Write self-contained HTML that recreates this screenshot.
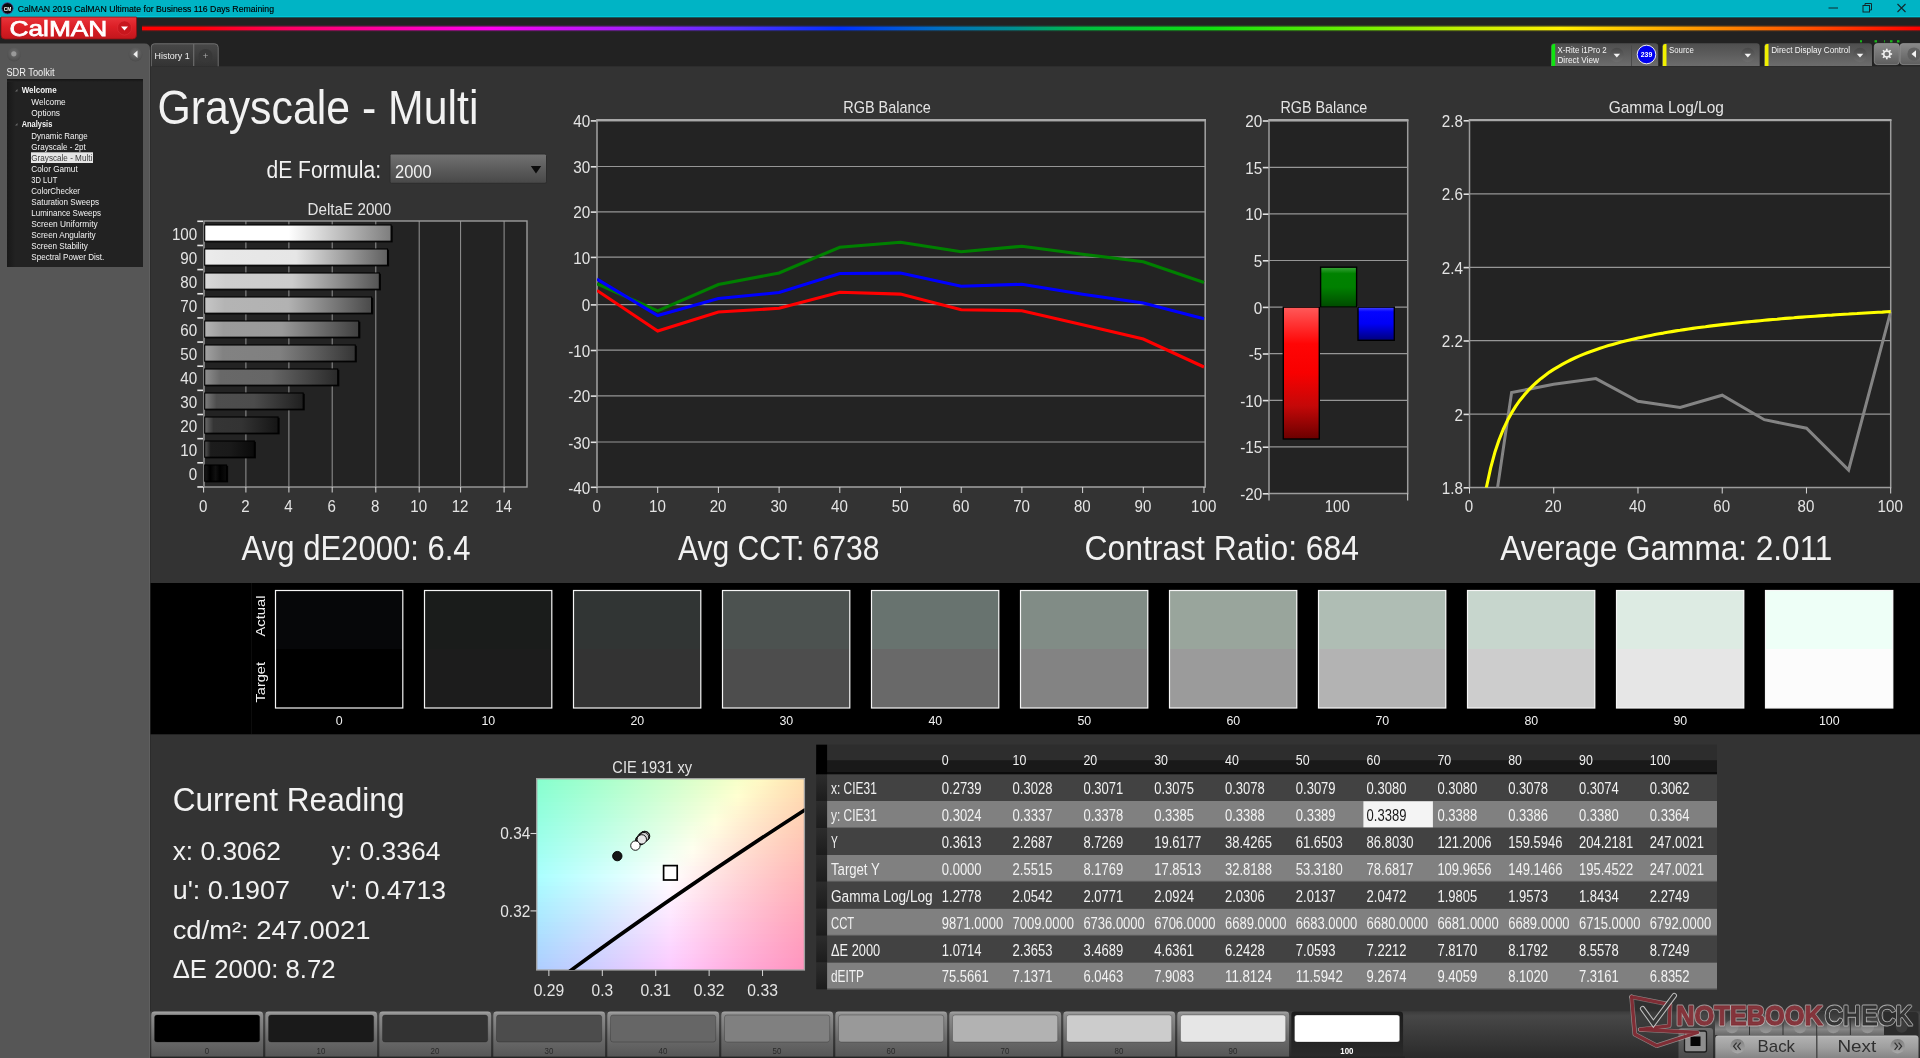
<!DOCTYPE html>
<html lang="en"><head><meta charset="utf-8"><title>CalMAN 2019 - Grayscale - Multi</title>
<style>
html,body{margin:0;padding:0;background:#222222;overflow:hidden}
body{width:1920px;height:1058px}
svg{display:block;font-family:"Liberation Sans",sans-serif;will-change:transform}
text{white-space:pre}
</style></head><body>
<svg width="1920" height="1058" viewBox="0 0 1920 1058">
<defs>
<linearGradient id="logo" x1="0" y1="0" x2="0" y2="1"><stop offset="0" stop-color="#e8353b"/><stop offset="0.45" stop-color="#dc1f26"/><stop offset="1" stop-color="#c2161c"/></linearGradient>
<linearGradient id="rainbow" x1="0" y1="0" x2="1" y2="0"><stop offset="0.0" stop-color="#ff0000"/><stop offset="0.0326" stop-color="#ff0008"/><stop offset="0.0832" stop-color="#ff0064"/><stop offset="0.1395" stop-color="#ff00a8"/><stop offset="0.1957" stop-color="#ff00f0"/><stop offset="0.2801" stop-color="#a020ff"/><stop offset="0.3363" stop-color="#5030ff"/><stop offset="0.3926" stop-color="#0030ff"/><stop offset="0.4488" stop-color="#0070c0"/><stop offset="0.491" stop-color="#009090"/><stop offset="0.5304" stop-color="#00c040"/><stop offset="0.6007" stop-color="#10e010"/><stop offset="0.685" stop-color="#70f000"/><stop offset="0.7413" stop-color="#c0f000"/><stop offset="0.7975" stop-color="#fff000"/><stop offset="0.8678" stop-color="#ffa000"/><stop offset="0.9381" stop-color="#ff5000"/><stop offset="1.0" stop-color="#ff0000"/></linearGradient>
<radialGradient id="knob" cx="0.5" cy="0.4" r="0.6"><stop offset="0" stop-color="#707070"/><stop offset="1" stop-color="#4c4c4c"/></radialGradient>
<linearGradient id="tree" x1="0" y1="0" x2="1" y2="0"><stop offset="0" stop-color="#181818"/><stop offset="0.06" stop-color="#222222"/><stop offset="1" stop-color="#222222"/></linearGradient>
<linearGradient id="treetop" x1="0" y1="0" x2="0" y2="1"><stop offset="0" stop-color="#141414"/><stop offset="1" stop-color="#222222"/></linearGradient>
<linearGradient id="tab" x1="0" y1="0" x2="0" y2="1"><stop offset="0" stop-color="#484848"/><stop offset="1" stop-color="#333333"/></linearGradient>
<linearGradient id="tb" x1="0" y1="0" x2="0" y2="1"><stop offset="0" stop-color="#4e4e4e"/><stop offset="1" stop-color="#6c6c6c"/></linearGradient>
<linearGradient id="ddc" x1="0" y1="0" x2="0" y2="1"><stop offset="0" stop-color="#484848"/><stop offset="1" stop-color="#6e6e6e"/></linearGradient>
<linearGradient id="gb" x1="0" y1="0" x2="0" y2="1"><stop offset="0" stop-color="#8a8a8a"/><stop offset="0.5" stop-color="#747474"/><stop offset="1" stop-color="#5e5e5e"/></linearGradient>
<linearGradient id="dd" x1="0" y1="0" x2="0" y2="1"><stop offset="0" stop-color="#727272"/><stop offset="0.5" stop-color="#5c5c5c"/><stop offset="1" stop-color="#484848"/></linearGradient>
<linearGradient id="b0" x1="0" y1="0" x2="1" y2="0"><stop offset="0" stop-color="#1a1a1a"/><stop offset="0.25" stop-color="#000000"/><stop offset="0.5" stop-color="#101010"/><stop offset="0.7" stop-color="#000000"/><stop offset="1" stop-color="#0c0c0c"/></linearGradient>
<linearGradient id="b1" x1="0" y1="0" x2="1" y2="0"><stop offset="0" stop-color="#575757"/><stop offset="0.12" stop-color="#1c1c1c"/><stop offset="0.5" stop-color="#1a1a1a"/><stop offset="1" stop-color="#0a0a0a"/></linearGradient>
<linearGradient id="b2" x1="0" y1="0" x2="1" y2="0"><stop offset="0" stop-color="#6a6a6a"/><stop offset="0.12" stop-color="#353535"/><stop offset="0.5" stop-color="#333333"/><stop offset="1" stop-color="#151515"/></linearGradient>
<linearGradient id="b3" x1="0" y1="0" x2="1" y2="0"><stop offset="0" stop-color="#7c7c7c"/><stop offset="0.12" stop-color="#4e4e4e"/><stop offset="0.5" stop-color="#4c4c4c"/><stop offset="1" stop-color="#1f1f1f"/></linearGradient>
<linearGradient id="b4" x1="0" y1="0" x2="1" y2="0"><stop offset="0" stop-color="#8f8f8f"/><stop offset="0.12" stop-color="#686868"/><stop offset="0.5" stop-color="#666666"/><stop offset="1" stop-color="#2a2a2a"/></linearGradient>
<linearGradient id="b5" x1="0" y1="0" x2="1" y2="0"><stop offset="0" stop-color="#a2a2a2"/><stop offset="0.12" stop-color="#828282"/><stop offset="0.5" stop-color="#808080"/><stop offset="1" stop-color="#353535"/></linearGradient>
<linearGradient id="b6" x1="0" y1="0" x2="1" y2="0"><stop offset="0" stop-color="#b4b4b4"/><stop offset="0.12" stop-color="#9b9b9b"/><stop offset="0.5" stop-color="#999999"/><stop offset="1" stop-color="#404040"/></linearGradient>
<linearGradient id="b7" x1="0" y1="0" x2="1" y2="0"><stop offset="0" stop-color="#c6c6c6"/><stop offset="0.12" stop-color="#b4b4b4"/><stop offset="0.5" stop-color="#b2b2b2"/><stop offset="1" stop-color="#4a4a4a"/></linearGradient>
<linearGradient id="b8" x1="0" y1="0" x2="1" y2="0"><stop offset="0" stop-color="#d9d9d9"/><stop offset="0.12" stop-color="#cecece"/><stop offset="0.5" stop-color="#cccccc"/><stop offset="1" stop-color="#555555"/></linearGradient>
<linearGradient id="b9" x1="0" y1="0" x2="1" y2="0"><stop offset="0" stop-color="#ececec"/><stop offset="0.12" stop-color="#e8e8e8"/><stop offset="0.5" stop-color="#e6e6e6"/><stop offset="1" stop-color="#606060"/></linearGradient>
<linearGradient id="b10" x1="0" y1="0" x2="1" y2="0"><stop offset="0" stop-color="#ffffff"/><stop offset="0.45" stop-color="#ffffff"/><stop offset="1" stop-color="#7e7e7e"/></linearGradient>
<clipPath id="cpA"><rect x="597" y="121" width="608.2" height="366"/></clipPath>
<linearGradient id="rbar" x1="0" y1="0" x2="0" y2="1"><stop offset="0" stop-color="#ff5a5a"/><stop offset="0.28" stop-color="#ff0505"/><stop offset="0.5" stop-color="#f80000"/><stop offset="0.75" stop-color="#c40808"/><stop offset="1" stop-color="#6a0000"/></linearGradient>
<linearGradient id="gbar" x1="0" y1="0" x2="0" y2="1"><stop offset="0" stop-color="#3aa43a"/><stop offset="0.16" stop-color="#008200"/><stop offset="0.5" stop-color="#008000"/><stop offset="1" stop-color="#004a00"/></linearGradient>
<linearGradient id="bbar" x1="0" y1="0" x2="0" y2="1"><stop offset="0" stop-color="#4848ff"/><stop offset="0.14" stop-color="#0404ff"/><stop offset="0.5" stop-color="#0000f6"/><stop offset="1" stop-color="#00007c"/></linearGradient>
<clipPath id="cpG"><rect x="1469.5" y="120.5" width="422.20000000000005" height="367.0"/></clipPath>
<linearGradient id="c0" x1="0" y1="0" x2="1" y2="0"><stop offset="0.0" stop-color="#86ffce"/><stop offset="0.0833" stop-color="#91ffcd"/><stop offset="0.1667" stop-color="#9dffcd"/><stop offset="0.25" stop-color="#a9ffcc"/><stop offset="0.3333" stop-color="#b5ffcc"/><stop offset="0.4167" stop-color="#c2ffcb"/><stop offset="0.5" stop-color="#cfffcb"/><stop offset="0.5833" stop-color="#dcffca"/><stop offset="0.6667" stop-color="#e9ffca"/><stop offset="0.75" stop-color="#f7ffc9"/><stop offset="0.8333" stop-color="#fff9c4"/><stop offset="0.9167" stop-color="#ffecb9"/><stop offset="1.0" stop-color="#ffe0af"/></linearGradient>
<linearGradient id="c1" x1="0" y1="0" x2="1" y2="0"><stop offset="0.0" stop-color="#87ffd0"/><stop offset="0.0833" stop-color="#93ffcf"/><stop offset="0.1667" stop-color="#9effcf"/><stop offset="0.25" stop-color="#abffce"/><stop offset="0.3333" stop-color="#b7ffce"/><stop offset="0.4167" stop-color="#c4ffcd"/><stop offset="0.5" stop-color="#d0ffcd"/><stop offset="0.5833" stop-color="#deffcc"/><stop offset="0.6667" stop-color="#ebffcb"/><stop offset="0.75" stop-color="#f9ffcb"/><stop offset="0.8333" stop-color="#fff7c4"/><stop offset="0.9167" stop-color="#ffeab9"/><stop offset="1.0" stop-color="#ffdeaf"/></linearGradient>
<linearGradient id="c2" x1="0" y1="0" x2="1" y2="0"><stop offset="0.0" stop-color="#88ffd1"/><stop offset="0.0833" stop-color="#94ffd1"/><stop offset="0.1667" stop-color="#a0ffd1"/><stop offset="0.25" stop-color="#acffd0"/><stop offset="0.3333" stop-color="#b9ffd0"/><stop offset="0.4167" stop-color="#c5ffcf"/><stop offset="0.5" stop-color="#d2ffcf"/><stop offset="0.5833" stop-color="#e0ffce"/><stop offset="0.6667" stop-color="#edffcd"/><stop offset="0.75" stop-color="#fbffcd"/><stop offset="0.8333" stop-color="#fff5c4"/><stop offset="0.9167" stop-color="#ffe8ba"/><stop offset="1.0" stop-color="#ffddb0"/></linearGradient>
<linearGradient id="c3" x1="0" y1="0" x2="1" y2="0"><stop offset="0.0" stop-color="#8affd3"/><stop offset="0.0833" stop-color="#96ffd3"/><stop offset="0.1667" stop-color="#a1ffd2"/><stop offset="0.25" stop-color="#aeffd2"/><stop offset="0.3333" stop-color="#baffd1"/><stop offset="0.4167" stop-color="#c7ffd1"/><stop offset="0.5" stop-color="#d4ffd1"/><stop offset="0.5833" stop-color="#e1ffd0"/><stop offset="0.6667" stop-color="#efffcf"/><stop offset="0.75" stop-color="#fdffcf"/><stop offset="0.8333" stop-color="#fff3c5"/><stop offset="0.9167" stop-color="#ffe6ba"/><stop offset="1.0" stop-color="#ffdbb0"/></linearGradient>
<linearGradient id="c4" x1="0" y1="0" x2="1" y2="0"><stop offset="0.0" stop-color="#8bffd5"/><stop offset="0.0833" stop-color="#97ffd5"/><stop offset="0.1667" stop-color="#a3ffd4"/><stop offset="0.25" stop-color="#afffd4"/><stop offset="0.3333" stop-color="#bcffd3"/><stop offset="0.4167" stop-color="#c9ffd3"/><stop offset="0.5" stop-color="#d6ffd2"/><stop offset="0.5833" stop-color="#e3ffd2"/><stop offset="0.6667" stop-color="#f1ffd1"/><stop offset="0.75" stop-color="#ffffd1"/><stop offset="0.8333" stop-color="#fff1c5"/><stop offset="0.9167" stop-color="#ffe5ba"/><stop offset="1.0" stop-color="#ffd9b0"/></linearGradient>
<linearGradient id="c5" x1="0" y1="0" x2="1" y2="0"><stop offset="0.0" stop-color="#8dffd7"/><stop offset="0.0833" stop-color="#98ffd7"/><stop offset="0.1667" stop-color="#a5ffd6"/><stop offset="0.25" stop-color="#b1ffd6"/><stop offset="0.3333" stop-color="#beffd5"/><stop offset="0.4167" stop-color="#caffd5"/><stop offset="0.5" stop-color="#d8ffd4"/><stop offset="0.5833" stop-color="#e5ffd4"/><stop offset="0.6667" stop-color="#f3ffd4"/><stop offset="0.75" stop-color="#fffdd1"/><stop offset="0.8333" stop-color="#ffefc5"/><stop offset="0.9167" stop-color="#ffe3bb"/><stop offset="1.0" stop-color="#ffd7b1"/></linearGradient>
<linearGradient id="c6" x1="0" y1="0" x2="1" y2="0"><stop offset="0.0" stop-color="#8effd9"/><stop offset="0.0833" stop-color="#9affd9"/><stop offset="0.1667" stop-color="#a6ffd8"/><stop offset="0.25" stop-color="#b3ffd8"/><stop offset="0.3333" stop-color="#bfffd7"/><stop offset="0.4167" stop-color="#ccffd7"/><stop offset="0.5" stop-color="#daffd7"/><stop offset="0.5833" stop-color="#e7ffd6"/><stop offset="0.6667" stop-color="#f5ffd6"/><stop offset="0.75" stop-color="#fffbd1"/><stop offset="0.8333" stop-color="#ffedc6"/><stop offset="0.9167" stop-color="#ffe1bb"/><stop offset="1.0" stop-color="#ffd5b1"/></linearGradient>
<linearGradient id="c7" x1="0" y1="0" x2="1" y2="0"><stop offset="0.0" stop-color="#8fffdb"/><stop offset="0.0833" stop-color="#9bffdb"/><stop offset="0.1667" stop-color="#a8ffda"/><stop offset="0.25" stop-color="#b4ffda"/><stop offset="0.3333" stop-color="#c1ffd9"/><stop offset="0.4167" stop-color="#ceffd9"/><stop offset="0.5" stop-color="#dcffd9"/><stop offset="0.5833" stop-color="#e9ffd8"/><stop offset="0.6667" stop-color="#f7ffd8"/><stop offset="0.75" stop-color="#fff8d2"/><stop offset="0.8333" stop-color="#ffebc6"/><stop offset="0.9167" stop-color="#ffdfbb"/><stop offset="1.0" stop-color="#ffd4b2"/></linearGradient>
<linearGradient id="c8" x1="0" y1="0" x2="1" y2="0"><stop offset="0.0" stop-color="#91ffdd"/><stop offset="0.0833" stop-color="#9dffdd"/><stop offset="0.1667" stop-color="#a9ffdc"/><stop offset="0.25" stop-color="#b6ffdc"/><stop offset="0.3333" stop-color="#c3ffdb"/><stop offset="0.4167" stop-color="#d0ffdb"/><stop offset="0.5" stop-color="#ddffdb"/><stop offset="0.5833" stop-color="#ebffda"/><stop offset="0.6667" stop-color="#f9ffda"/><stop offset="0.75" stop-color="#fff6d2"/><stop offset="0.8333" stop-color="#ffe9c6"/><stop offset="0.9167" stop-color="#ffddbc"/><stop offset="1.0" stop-color="#ffd2b2"/></linearGradient>
<linearGradient id="c9" x1="0" y1="0" x2="1" y2="0"><stop offset="0.0" stop-color="#92ffdf"/><stop offset="0.0833" stop-color="#9effdf"/><stop offset="0.1667" stop-color="#abffde"/><stop offset="0.25" stop-color="#b7ffde"/><stop offset="0.3333" stop-color="#c4ffdd"/><stop offset="0.4167" stop-color="#d2ffdd"/><stop offset="0.5" stop-color="#dfffdd"/><stop offset="0.5833" stop-color="#edffdc"/><stop offset="0.6667" stop-color="#fcffdc"/><stop offset="0.75" stop-color="#fff4d2"/><stop offset="0.8333" stop-color="#ffe7c7"/><stop offset="0.9167" stop-color="#ffdbbc"/><stop offset="1.0" stop-color="#ffd0b2"/></linearGradient>
<linearGradient id="c10" x1="0" y1="0" x2="1" y2="0"><stop offset="0.0" stop-color="#94ffe1"/><stop offset="0.0833" stop-color="#a0ffe1"/><stop offset="0.1667" stop-color="#acffe0"/><stop offset="0.25" stop-color="#b9ffe0"/><stop offset="0.3333" stop-color="#c6ffe0"/><stop offset="0.4167" stop-color="#d4ffdf"/><stop offset="0.5" stop-color="#e1ffdf"/><stop offset="0.5833" stop-color="#efffde"/><stop offset="0.6667" stop-color="#feffde"/><stop offset="0.75" stop-color="#fff2d3"/><stop offset="0.8333" stop-color="#ffe5c7"/><stop offset="0.9167" stop-color="#ffd9bc"/><stop offset="1.0" stop-color="#ffceb3"/></linearGradient>
<linearGradient id="c11" x1="0" y1="0" x2="1" y2="0"><stop offset="0.0" stop-color="#95ffe3"/><stop offset="0.0833" stop-color="#a1ffe3"/><stop offset="0.1667" stop-color="#aeffe2"/><stop offset="0.25" stop-color="#bbffe2"/><stop offset="0.3333" stop-color="#c8ffe2"/><stop offset="0.4167" stop-color="#d6ffe1"/><stop offset="0.5" stop-color="#e3ffe1"/><stop offset="0.5833" stop-color="#f1ffe1"/><stop offset="0.6667" stop-color="#fffedf"/><stop offset="0.75" stop-color="#fff0d3"/><stop offset="0.8333" stop-color="#ffe3c7"/><stop offset="0.9167" stop-color="#ffd8bd"/><stop offset="1.0" stop-color="#ffcdb3"/></linearGradient>
<linearGradient id="c12" x1="0" y1="0" x2="1" y2="0"><stop offset="0.0" stop-color="#97ffe5"/><stop offset="0.0833" stop-color="#a3ffe5"/><stop offset="0.1667" stop-color="#b0ffe4"/><stop offset="0.25" stop-color="#bdffe4"/><stop offset="0.3333" stop-color="#caffe4"/><stop offset="0.4167" stop-color="#d7ffe3"/><stop offset="0.5" stop-color="#e5ffe3"/><stop offset="0.5833" stop-color="#f4ffe3"/><stop offset="0.6667" stop-color="#fffce0"/><stop offset="0.75" stop-color="#ffeed3"/><stop offset="0.8333" stop-color="#ffe1c8"/><stop offset="0.9167" stop-color="#ffd6bd"/><stop offset="1.0" stop-color="#ffcbb3"/></linearGradient>
<linearGradient id="c13" x1="0" y1="0" x2="1" y2="0"><stop offset="0.0" stop-color="#98ffe7"/><stop offset="0.0833" stop-color="#a5ffe7"/><stop offset="0.1667" stop-color="#b1ffe6"/><stop offset="0.25" stop-color="#beffe6"/><stop offset="0.3333" stop-color="#ccffe6"/><stop offset="0.4167" stop-color="#d9ffe6"/><stop offset="0.5" stop-color="#e7ffe5"/><stop offset="0.5833" stop-color="#f6ffe5"/><stop offset="0.6667" stop-color="#fffae0"/><stop offset="0.75" stop-color="#ffecd3"/><stop offset="0.8333" stop-color="#ffe0c8"/><stop offset="0.9167" stop-color="#ffd4bd"/><stop offset="1.0" stop-color="#ffc9b4"/></linearGradient>
<linearGradient id="c14" x1="0" y1="0" x2="1" y2="0"><stop offset="0.0" stop-color="#9affe9"/><stop offset="0.0833" stop-color="#a6ffe9"/><stop offset="0.1667" stop-color="#b3ffe8"/><stop offset="0.25" stop-color="#c0ffe8"/><stop offset="0.3333" stop-color="#ceffe8"/><stop offset="0.4167" stop-color="#dbffe8"/><stop offset="0.5" stop-color="#e9ffe8"/><stop offset="0.5833" stop-color="#f8ffe7"/><stop offset="0.6667" stop-color="#fff8e0"/><stop offset="0.75" stop-color="#ffead4"/><stop offset="0.8333" stop-color="#ffdec8"/><stop offset="0.9167" stop-color="#ffd2be"/><stop offset="1.0" stop-color="#ffc8b4"/></linearGradient>
<linearGradient id="c15" x1="0" y1="0" x2="1" y2="0"><stop offset="0.0" stop-color="#9bffeb"/><stop offset="0.0833" stop-color="#a8ffeb"/><stop offset="0.1667" stop-color="#b5ffeb"/><stop offset="0.25" stop-color="#c2ffea"/><stop offset="0.3333" stop-color="#cfffea"/><stop offset="0.4167" stop-color="#ddffea"/><stop offset="0.5" stop-color="#ebffea"/><stop offset="0.5833" stop-color="#faffea"/><stop offset="0.6667" stop-color="#fff5e1"/><stop offset="0.75" stop-color="#ffe8d4"/><stop offset="0.8333" stop-color="#ffdcc9"/><stop offset="0.9167" stop-color="#ffd0be"/><stop offset="1.0" stop-color="#ffc6b4"/></linearGradient>
<linearGradient id="c16" x1="0" y1="0" x2="1" y2="0"><stop offset="0.0" stop-color="#9dffed"/><stop offset="0.0833" stop-color="#a9ffed"/><stop offset="0.1667" stop-color="#b6ffed"/><stop offset="0.25" stop-color="#c4ffed"/><stop offset="0.3333" stop-color="#d1ffec"/><stop offset="0.4167" stop-color="#dfffec"/><stop offset="0.5" stop-color="#eeffec"/><stop offset="0.5833" stop-color="#fcffec"/><stop offset="0.6667" stop-color="#fff3e1"/><stop offset="0.75" stop-color="#ffe6d4"/><stop offset="0.8333" stop-color="#ffdac9"/><stop offset="0.9167" stop-color="#ffcfbe"/><stop offset="1.0" stop-color="#ffc4b5"/></linearGradient>
<linearGradient id="c17" x1="0" y1="0" x2="1" y2="0"><stop offset="0.0" stop-color="#9effef"/><stop offset="0.0833" stop-color="#abffef"/><stop offset="0.1667" stop-color="#b8ffef"/><stop offset="0.25" stop-color="#c5ffef"/><stop offset="0.3333" stop-color="#d3ffef"/><stop offset="0.4167" stop-color="#e1ffee"/><stop offset="0.5" stop-color="#f0ffee"/><stop offset="0.5833" stop-color="#feffee"/><stop offset="0.6667" stop-color="#fff1e1"/><stop offset="0.75" stop-color="#ffe4d5"/><stop offset="0.8333" stop-color="#ffd8c9"/><stop offset="0.9167" stop-color="#ffcdbf"/><stop offset="1.0" stop-color="#ffc3b5"/></linearGradient>
<linearGradient id="c18" x1="0" y1="0" x2="1" y2="0"><stop offset="0.0" stop-color="#a0fff1"/><stop offset="0.0833" stop-color="#adfff1"/><stop offset="0.1667" stop-color="#bafff1"/><stop offset="0.25" stop-color="#c7fff1"/><stop offset="0.3333" stop-color="#d5fff1"/><stop offset="0.4167" stop-color="#e3fff1"/><stop offset="0.5" stop-color="#f2fff1"/><stop offset="0.5833" stop-color="#fffdef"/><stop offset="0.6667" stop-color="#ffefe1"/><stop offset="0.75" stop-color="#ffe2d5"/><stop offset="0.8333" stop-color="#ffd6c9"/><stop offset="0.9167" stop-color="#ffcbbf"/><stop offset="1.0" stop-color="#ffc1b5"/></linearGradient>
<linearGradient id="c19" x1="0" y1="0" x2="1" y2="0"><stop offset="0.0" stop-color="#a1fff4"/><stop offset="0.0833" stop-color="#aefff3"/><stop offset="0.1667" stop-color="#bcfff3"/><stop offset="0.25" stop-color="#c9fff3"/><stop offset="0.3333" stop-color="#d7fff3"/><stop offset="0.4167" stop-color="#e5fff3"/><stop offset="0.5" stop-color="#f4fff3"/><stop offset="0.5833" stop-color="#fffbef"/><stop offset="0.6667" stop-color="#ffede2"/><stop offset="0.75" stop-color="#ffe0d5"/><stop offset="0.8333" stop-color="#ffd4ca"/><stop offset="0.9167" stop-color="#ffc9bf"/><stop offset="1.0" stop-color="#ffbfb6"/></linearGradient>
<linearGradient id="c20" x1="0" y1="0" x2="1" y2="0"><stop offset="0.0" stop-color="#a3fff6"/><stop offset="0.0833" stop-color="#b0fff6"/><stop offset="0.1667" stop-color="#bdfff6"/><stop offset="0.25" stop-color="#cbfff6"/><stop offset="0.3333" stop-color="#d9fff5"/><stop offset="0.4167" stop-color="#e7fff5"/><stop offset="0.5" stop-color="#f6fff5"/><stop offset="0.5833" stop-color="#fff9ef"/><stop offset="0.6667" stop-color="#ffebe2"/><stop offset="0.75" stop-color="#ffded5"/><stop offset="0.8333" stop-color="#ffd2ca"/><stop offset="0.9167" stop-color="#ffc8c0"/><stop offset="1.0" stop-color="#ffbeb6"/></linearGradient>
<linearGradient id="c21" x1="0" y1="0" x2="1" y2="0"><stop offset="0.0" stop-color="#a5fff8"/><stop offset="0.0833" stop-color="#b2fff8"/><stop offset="0.1667" stop-color="#bffff8"/><stop offset="0.25" stop-color="#cdfff8"/><stop offset="0.3333" stop-color="#dbfff8"/><stop offset="0.4167" stop-color="#eafff8"/><stop offset="0.5" stop-color="#f8fff8"/><stop offset="0.5833" stop-color="#fff7ef"/><stop offset="0.6667" stop-color="#ffe9e2"/><stop offset="0.75" stop-color="#ffdcd6"/><stop offset="0.8333" stop-color="#ffd1ca"/><stop offset="0.9167" stop-color="#ffc6c0"/><stop offset="1.0" stop-color="#ffbcb6"/></linearGradient>
<linearGradient id="c22" x1="0" y1="0" x2="1" y2="0"><stop offset="0.0" stop-color="#a6fffa"/><stop offset="0.0833" stop-color="#b3fffa"/><stop offset="0.1667" stop-color="#c1fffa"/><stop offset="0.25" stop-color="#cffffa"/><stop offset="0.3333" stop-color="#ddfffa"/><stop offset="0.4167" stop-color="#ecfffa"/><stop offset="0.5" stop-color="#fbfffa"/><stop offset="0.5833" stop-color="#fff4f0"/><stop offset="0.6667" stop-color="#ffe7e2"/><stop offset="0.75" stop-color="#ffdad6"/><stop offset="0.8333" stop-color="#ffcfcb"/><stop offset="0.9167" stop-color="#ffc4c0"/><stop offset="1.0" stop-color="#ffbab7"/></linearGradient>
<linearGradient id="c23" x1="0" y1="0" x2="1" y2="0"><stop offset="0.0" stop-color="#a8fffd"/><stop offset="0.0833" stop-color="#b5fffc"/><stop offset="0.1667" stop-color="#c3fffc"/><stop offset="0.25" stop-color="#d1fffc"/><stop offset="0.3333" stop-color="#dffffc"/><stop offset="0.4167" stop-color="#eefffc"/><stop offset="0.5" stop-color="#fdfffc"/><stop offset="0.5833" stop-color="#fff2f0"/><stop offset="0.6667" stop-color="#ffe5e3"/><stop offset="0.75" stop-color="#ffd8d6"/><stop offset="0.8333" stop-color="#ffcdcb"/><stop offset="0.9167" stop-color="#ffc2c1"/><stop offset="1.0" stop-color="#ffb9b7"/></linearGradient>
<linearGradient id="c24" x1="0" y1="0" x2="1" y2="0"><stop offset="0.0" stop-color="#aaffff"/><stop offset="0.0833" stop-color="#b7ffff"/><stop offset="0.1667" stop-color="#c5ffff"/><stop offset="0.25" stop-color="#d3ffff"/><stop offset="0.3333" stop-color="#e1ffff"/><stop offset="0.4167" stop-color="#f0ffff"/><stop offset="0.5" stop-color="#ffffff"/><stop offset="0.5833" stop-color="#fff0f0"/><stop offset="0.6667" stop-color="#ffe3e3"/><stop offset="0.75" stop-color="#ffd6d7"/><stop offset="0.8333" stop-color="#ffcbcb"/><stop offset="0.9167" stop-color="#ffc1c1"/><stop offset="1.0" stop-color="#ffb7b7"/></linearGradient>
<linearGradient id="c25" x1="0" y1="0" x2="1" y2="0"><stop offset="0.0" stop-color="#aafdff"/><stop offset="0.0833" stop-color="#b7fdff"/><stop offset="0.1667" stop-color="#c5fdff"/><stop offset="0.25" stop-color="#d3fdff"/><stop offset="0.3333" stop-color="#e1fdff"/><stop offset="0.4167" stop-color="#f0fdff"/><stop offset="0.5" stop-color="#fffdff"/><stop offset="0.5833" stop-color="#ffeef0"/><stop offset="0.6667" stop-color="#ffe1e3"/><stop offset="0.75" stop-color="#ffd5d7"/><stop offset="0.8333" stop-color="#ffc9cc"/><stop offset="0.9167" stop-color="#ffbfc1"/><stop offset="1.0" stop-color="#ffb6b8"/></linearGradient>
<linearGradient id="c26" x1="0" y1="0" x2="1" y2="0"><stop offset="0.0" stop-color="#aafbff"/><stop offset="0.0833" stop-color="#b7fbff"/><stop offset="0.1667" stop-color="#c5faff"/><stop offset="0.25" stop-color="#d3faff"/><stop offset="0.3333" stop-color="#e1faff"/><stop offset="0.4167" stop-color="#f0faff"/><stop offset="0.5" stop-color="#fffaff"/><stop offset="0.5833" stop-color="#ffecf1"/><stop offset="0.6667" stop-color="#ffdfe3"/><stop offset="0.75" stop-color="#ffd3d7"/><stop offset="0.8333" stop-color="#ffc8cc"/><stop offset="0.9167" stop-color="#ffbdc1"/><stop offset="1.0" stop-color="#ffb4b8"/></linearGradient>
<linearGradient id="c27" x1="0" y1="0" x2="1" y2="0"><stop offset="0.0" stop-color="#aaf8ff"/><stop offset="0.0833" stop-color="#b7f8ff"/><stop offset="0.1667" stop-color="#c5f8ff"/><stop offset="0.25" stop-color="#d3f8ff"/><stop offset="0.3333" stop-color="#e1f8ff"/><stop offset="0.4167" stop-color="#f0f8ff"/><stop offset="0.5" stop-color="#fff8ff"/><stop offset="0.5833" stop-color="#ffeaf1"/><stop offset="0.6667" stop-color="#ffdde4"/><stop offset="0.75" stop-color="#ffd1d7"/><stop offset="0.8333" stop-color="#ffc6cc"/><stop offset="0.9167" stop-color="#ffbcc2"/><stop offset="1.0" stop-color="#ffb2b8"/></linearGradient>
<linearGradient id="c28" x1="0" y1="0" x2="1" y2="0"><stop offset="0.0" stop-color="#aaf6ff"/><stop offset="0.0833" stop-color="#b7f6ff"/><stop offset="0.1667" stop-color="#c5f6ff"/><stop offset="0.25" stop-color="#d3f6ff"/><stop offset="0.3333" stop-color="#e1f6ff"/><stop offset="0.4167" stop-color="#f0f5ff"/><stop offset="0.5" stop-color="#fff5ff"/><stop offset="0.5833" stop-color="#ffe8f1"/><stop offset="0.6667" stop-color="#ffdbe4"/><stop offset="0.75" stop-color="#ffcfd8"/><stop offset="0.8333" stop-color="#ffc4cc"/><stop offset="0.9167" stop-color="#ffbac2"/><stop offset="1.0" stop-color="#ffb1b8"/></linearGradient>
<linearGradient id="c29" x1="0" y1="0" x2="1" y2="0"><stop offset="0.0" stop-color="#aaf4ff"/><stop offset="0.0833" stop-color="#b8f4ff"/><stop offset="0.1667" stop-color="#c5f4ff"/><stop offset="0.25" stop-color="#d3f3ff"/><stop offset="0.3333" stop-color="#e1f3ff"/><stop offset="0.4167" stop-color="#eff3ff"/><stop offset="0.5" stop-color="#fef3ff"/><stop offset="0.5833" stop-color="#ffe6f1"/><stop offset="0.6667" stop-color="#ffd9e4"/><stop offset="0.75" stop-color="#ffcdd8"/><stop offset="0.8333" stop-color="#ffc2cd"/><stop offset="0.9167" stop-color="#ffb8c2"/><stop offset="1.0" stop-color="#ffafb9"/></linearGradient>
<linearGradient id="c30" x1="0" y1="0" x2="1" y2="0"><stop offset="0.0" stop-color="#abf2ff"/><stop offset="0.0833" stop-color="#b8f1ff"/><stop offset="0.1667" stop-color="#c5f1ff"/><stop offset="0.25" stop-color="#d3f1ff"/><stop offset="0.3333" stop-color="#e1f1ff"/><stop offset="0.4167" stop-color="#eff1ff"/><stop offset="0.5" stop-color="#fef1ff"/><stop offset="0.5833" stop-color="#ffe4f1"/><stop offset="0.6667" stop-color="#ffd7e4"/><stop offset="0.75" stop-color="#ffcbd8"/><stop offset="0.8333" stop-color="#ffc1cd"/><stop offset="0.9167" stop-color="#ffb7c3"/><stop offset="1.0" stop-color="#ffaeb9"/></linearGradient>
<linearGradient id="c31" x1="0" y1="0" x2="1" y2="0"><stop offset="0.0" stop-color="#abefff"/><stop offset="0.0833" stop-color="#b8efff"/><stop offset="0.1667" stop-color="#c5efff"/><stop offset="0.25" stop-color="#d3efff"/><stop offset="0.3333" stop-color="#e1efff"/><stop offset="0.4167" stop-color="#efeeff"/><stop offset="0.5" stop-color="#feeeff"/><stop offset="0.5833" stop-color="#ffe1f2"/><stop offset="0.6667" stop-color="#ffd5e4"/><stop offset="0.75" stop-color="#ffc9d8"/><stop offset="0.8333" stop-color="#ffbfcd"/><stop offset="0.9167" stop-color="#ffb5c3"/><stop offset="1.0" stop-color="#ffacb9"/></linearGradient>
<linearGradient id="c32" x1="0" y1="0" x2="1" y2="0"><stop offset="0.0" stop-color="#abedff"/><stop offset="0.0833" stop-color="#b8edff"/><stop offset="0.1667" stop-color="#c5edff"/><stop offset="0.25" stop-color="#d3edff"/><stop offset="0.3333" stop-color="#e1ecff"/><stop offset="0.4167" stop-color="#efecff"/><stop offset="0.5" stop-color="#feecff"/><stop offset="0.5833" stop-color="#ffdff2"/><stop offset="0.6667" stop-color="#ffd3e5"/><stop offset="0.75" stop-color="#ffc8d9"/><stop offset="0.8333" stop-color="#ffbdce"/><stop offset="0.9167" stop-color="#ffb3c3"/><stop offset="1.0" stop-color="#ffaaba"/></linearGradient>
<linearGradient id="c33" x1="0" y1="0" x2="1" y2="0"><stop offset="0.0" stop-color="#abebff"/><stop offset="0.0833" stop-color="#b8ebff"/><stop offset="0.1667" stop-color="#c5ebff"/><stop offset="0.25" stop-color="#d3eaff"/><stop offset="0.3333" stop-color="#e1eaff"/><stop offset="0.4167" stop-color="#efeaff"/><stop offset="0.5" stop-color="#fee9ff"/><stop offset="0.5833" stop-color="#ffddf2"/><stop offset="0.6667" stop-color="#ffd1e5"/><stop offset="0.75" stop-color="#ffc6d9"/><stop offset="0.8333" stop-color="#ffbbce"/><stop offset="0.9167" stop-color="#ffb2c4"/><stop offset="1.0" stop-color="#ffa9ba"/></linearGradient>
<linearGradient id="c34" x1="0" y1="0" x2="1" y2="0"><stop offset="0.0" stop-color="#abe9ff"/><stop offset="0.0833" stop-color="#b8e9ff"/><stop offset="0.1667" stop-color="#c5e8ff"/><stop offset="0.25" stop-color="#d3e8ff"/><stop offset="0.3333" stop-color="#e1e8ff"/><stop offset="0.4167" stop-color="#efe8ff"/><stop offset="0.5" stop-color="#fee7ff"/><stop offset="0.5833" stop-color="#ffdbf2"/><stop offset="0.6667" stop-color="#ffcfe5"/><stop offset="0.75" stop-color="#ffc4d9"/><stop offset="0.8333" stop-color="#ffbace"/><stop offset="0.9167" stop-color="#ffb0c4"/><stop offset="1.0" stop-color="#ffa7ba"/></linearGradient>
<linearGradient id="c35" x1="0" y1="0" x2="1" y2="0"><stop offset="0.0" stop-color="#abe7ff"/><stop offset="0.0833" stop-color="#b8e7ff"/><stop offset="0.1667" stop-color="#c5e6ff"/><stop offset="0.25" stop-color="#d3e6ff"/><stop offset="0.3333" stop-color="#e1e6ff"/><stop offset="0.4167" stop-color="#efe5ff"/><stop offset="0.5" stop-color="#fde5ff"/><stop offset="0.5833" stop-color="#ffd9f2"/><stop offset="0.6667" stop-color="#ffcde5"/><stop offset="0.75" stop-color="#ffc2d9"/><stop offset="0.8333" stop-color="#ffb8ce"/><stop offset="0.9167" stop-color="#ffafc4"/><stop offset="1.0" stop-color="#ffa6bb"/></linearGradient>
<linearGradient id="c36" x1="0" y1="0" x2="1" y2="0"><stop offset="0.0" stop-color="#abe5ff"/><stop offset="0.0833" stop-color="#b8e4ff"/><stop offset="0.1667" stop-color="#c5e4ff"/><stop offset="0.25" stop-color="#d3e4ff"/><stop offset="0.3333" stop-color="#e1e3ff"/><stop offset="0.4167" stop-color="#efe3ff"/><stop offset="0.5" stop-color="#fde3ff"/><stop offset="0.5833" stop-color="#ffd7f3"/><stop offset="0.6667" stop-color="#ffcbe6"/><stop offset="0.75" stop-color="#ffc0da"/><stop offset="0.8333" stop-color="#ffb6cf"/><stop offset="0.9167" stop-color="#ffadc4"/><stop offset="1.0" stop-color="#ffa4bb"/></linearGradient>
<linearGradient id="c37" x1="0" y1="0" x2="1" y2="0"><stop offset="0.0" stop-color="#abe3ff"/><stop offset="0.0833" stop-color="#b8e2ff"/><stop offset="0.1667" stop-color="#c5e2ff"/><stop offset="0.25" stop-color="#d3e2ff"/><stop offset="0.3333" stop-color="#e1e1ff"/><stop offset="0.4167" stop-color="#efe1ff"/><stop offset="0.5" stop-color="#fde0ff"/><stop offset="0.5833" stop-color="#ffd5f3"/><stop offset="0.6667" stop-color="#ffcae6"/><stop offset="0.75" stop-color="#ffbfda"/><stop offset="0.8333" stop-color="#ffb5cf"/><stop offset="0.9167" stop-color="#ffabc5"/><stop offset="1.0" stop-color="#ffa3bb"/></linearGradient>
<linearGradient id="c38" x1="0" y1="0" x2="1" y2="0"><stop offset="0.0" stop-color="#ace1ff"/><stop offset="0.0833" stop-color="#b8e0ff"/><stop offset="0.1667" stop-color="#c5e0ff"/><stop offset="0.25" stop-color="#d3dfff"/><stop offset="0.3333" stop-color="#e1dfff"/><stop offset="0.4167" stop-color="#efdfff"/><stop offset="0.5" stop-color="#fddeff"/><stop offset="0.5833" stop-color="#ffd3f3"/><stop offset="0.6667" stop-color="#ffc8e6"/><stop offset="0.75" stop-color="#ffbdda"/><stop offset="0.8333" stop-color="#ffb3cf"/><stop offset="0.9167" stop-color="#ffaac5"/><stop offset="1.0" stop-color="#ffa1bc"/></linearGradient>
<linearGradient id="c39" x1="0" y1="0" x2="1" y2="0"><stop offset="0.0" stop-color="#acdeff"/><stop offset="0.0833" stop-color="#b8deff"/><stop offset="0.1667" stop-color="#c6deff"/><stop offset="0.25" stop-color="#d3ddff"/><stop offset="0.3333" stop-color="#e0ddff"/><stop offset="0.4167" stop-color="#eedcff"/><stop offset="0.5" stop-color="#fddcff"/><stop offset="0.5833" stop-color="#ffd1f3"/><stop offset="0.6667" stop-color="#ffc6e6"/><stop offset="0.75" stop-color="#ffbbda"/><stop offset="0.8333" stop-color="#ffb1cf"/><stop offset="0.9167" stop-color="#ffa8c5"/><stop offset="1.0" stop-color="#ffa0bc"/></linearGradient>
<linearGradient id="c40" x1="0" y1="0" x2="1" y2="0"><stop offset="0.0" stop-color="#acdcff"/><stop offset="0.0833" stop-color="#b9dcff"/><stop offset="0.1667" stop-color="#c6dcff"/><stop offset="0.25" stop-color="#d3dbff"/><stop offset="0.3333" stop-color="#e0dbff"/><stop offset="0.4167" stop-color="#eedaff"/><stop offset="0.5" stop-color="#fddaff"/><stop offset="0.5833" stop-color="#ffcff3"/><stop offset="0.6667" stop-color="#ffc4e7"/><stop offset="0.75" stop-color="#ffb9db"/><stop offset="0.8333" stop-color="#ffb0d0"/><stop offset="0.9167" stop-color="#ffa7c6"/><stop offset="1.0" stop-color="#ff9ebc"/></linearGradient>
<linearGradient id="c41" x1="0" y1="0" x2="1" y2="0"><stop offset="0.0" stop-color="#acdaff"/><stop offset="0.0833" stop-color="#b9daff"/><stop offset="0.1667" stop-color="#c6d9ff"/><stop offset="0.25" stop-color="#d3d9ff"/><stop offset="0.3333" stop-color="#e0d9ff"/><stop offset="0.4167" stop-color="#eed8ff"/><stop offset="0.5" stop-color="#fcd8ff"/><stop offset="0.5833" stop-color="#ffcdf4"/><stop offset="0.6667" stop-color="#ffc2e7"/><stop offset="0.75" stop-color="#ffb8db"/><stop offset="0.8333" stop-color="#ffaed0"/><stop offset="0.9167" stop-color="#ffa5c6"/><stop offset="1.0" stop-color="#ff9dbc"/></linearGradient>
<linearGradient id="c42" x1="0" y1="0" x2="1" y2="0"><stop offset="0.0" stop-color="#acd8ff"/><stop offset="0.0833" stop-color="#b9d8ff"/><stop offset="0.1667" stop-color="#c6d7ff"/><stop offset="0.25" stop-color="#d3d7ff"/><stop offset="0.3333" stop-color="#e0d6ff"/><stop offset="0.4167" stop-color="#eed6ff"/><stop offset="0.5" stop-color="#fcd5ff"/><stop offset="0.5833" stop-color="#ffccf4"/><stop offset="0.6667" stop-color="#ffc0e7"/><stop offset="0.75" stop-color="#ffb6db"/><stop offset="0.8333" stop-color="#ffacd0"/><stop offset="0.9167" stop-color="#ffa4c6"/><stop offset="1.0" stop-color="#ff9bbd"/></linearGradient>
<linearGradient id="c43" x1="0" y1="0" x2="1" y2="0"><stop offset="0.0" stop-color="#acd6ff"/><stop offset="0.0833" stop-color="#b9d6ff"/><stop offset="0.1667" stop-color="#c6d5ff"/><stop offset="0.25" stop-color="#d3d5ff"/><stop offset="0.3333" stop-color="#e0d4ff"/><stop offset="0.4167" stop-color="#eed4ff"/><stop offset="0.5" stop-color="#fcd3ff"/><stop offset="0.5833" stop-color="#ffcaf4"/><stop offset="0.6667" stop-color="#ffbfe7"/><stop offset="0.75" stop-color="#ffb4db"/><stop offset="0.8333" stop-color="#ffabd1"/><stop offset="0.9167" stop-color="#ffa2c6"/><stop offset="1.0" stop-color="#ff9abd"/></linearGradient>
<linearGradient id="c44" x1="0" y1="0" x2="1" y2="0"><stop offset="0.0" stop-color="#acd4ff"/><stop offset="0.0833" stop-color="#b9d4ff"/><stop offset="0.1667" stop-color="#c6d3ff"/><stop offset="0.25" stop-color="#d3d3ff"/><stop offset="0.3333" stop-color="#e0d2ff"/><stop offset="0.4167" stop-color="#eed2ff"/><stop offset="0.5" stop-color="#fcd1ff"/><stop offset="0.5833" stop-color="#ffc8f4"/><stop offset="0.6667" stop-color="#ffbde7"/><stop offset="0.75" stop-color="#ffb3dc"/><stop offset="0.8333" stop-color="#ffa9d1"/><stop offset="0.9167" stop-color="#ffa1c7"/><stop offset="1.0" stop-color="#ff99bd"/></linearGradient>
<linearGradient id="c45" x1="0" y1="0" x2="1" y2="0"><stop offset="0.0" stop-color="#add2ff"/><stop offset="0.0833" stop-color="#b9d2ff"/><stop offset="0.1667" stop-color="#c6d1ff"/><stop offset="0.25" stop-color="#d3d1ff"/><stop offset="0.3333" stop-color="#e0d0ff"/><stop offset="0.4167" stop-color="#eed0ff"/><stop offset="0.5" stop-color="#fccfff"/><stop offset="0.5833" stop-color="#ffc6f4"/><stop offset="0.6667" stop-color="#ffbbe8"/><stop offset="0.75" stop-color="#ffb1dc"/><stop offset="0.8333" stop-color="#ffa8d1"/><stop offset="0.9167" stop-color="#ff9fc7"/><stop offset="1.0" stop-color="#ff97be"/></linearGradient>
<linearGradient id="c46" x1="0" y1="0" x2="1" y2="0"><stop offset="0.0" stop-color="#add0ff"/><stop offset="0.0833" stop-color="#b9d0ff"/><stop offset="0.1667" stop-color="#c6cfff"/><stop offset="0.25" stop-color="#d3cfff"/><stop offset="0.3333" stop-color="#e0ceff"/><stop offset="0.4167" stop-color="#eecdff"/><stop offset="0.5" stop-color="#fccdff"/><stop offset="0.5833" stop-color="#ffc4f5"/><stop offset="0.6667" stop-color="#ffb9e8"/><stop offset="0.75" stop-color="#ffafdc"/><stop offset="0.8333" stop-color="#ffa6d1"/><stop offset="0.9167" stop-color="#ff9ec7"/><stop offset="1.0" stop-color="#ff96be"/></linearGradient>
<linearGradient id="c47" x1="0" y1="0" x2="1" y2="0"><stop offset="0.0" stop-color="#adceff"/><stop offset="0.0833" stop-color="#b9ceff"/><stop offset="0.1667" stop-color="#c6cdff"/><stop offset="0.25" stop-color="#d3cdff"/><stop offset="0.3333" stop-color="#e0ccff"/><stop offset="0.4167" stop-color="#eecbff"/><stop offset="0.5" stop-color="#fbcbff"/><stop offset="0.5833" stop-color="#ffc2f5"/><stop offset="0.6667" stop-color="#ffb7e8"/><stop offset="0.75" stop-color="#ffaedc"/><stop offset="0.8333" stop-color="#ffa4d2"/><stop offset="0.9167" stop-color="#ff9cc8"/><stop offset="1.0" stop-color="#ff94be"/></linearGradient>
<clipPath id="cpC"><rect x="536.7" y="778.7" width="267.69999999999993" height="191.29999999999995"/></clipPath>
<linearGradient id="strip" x1="0" y1="0" x2="0" y2="1"><stop offset="0" stop-color="#2c2c2c"/><stop offset="1" stop-color="#1c1c1c"/></linearGradient>
<linearGradient id="botbg" x1="0" y1="0" x2="0" y2="1"><stop offset="0" stop-color="#3c3c3c"/><stop offset="0.1" stop-color="#474747"/><stop offset="0.5" stop-color="#3a3a3a"/><stop offset="1" stop-color="#2a2a2a"/></linearGradient>
<linearGradient id="btn" x1="0" y1="0" x2="0" y2="1"><stop offset="0" stop-color="#a6a6a6"/><stop offset="0.06" stop-color="#8e8e8e"/><stop offset="0.6" stop-color="#6a6a6a"/><stop offset="1" stop-color="#565656"/></linearGradient>
<linearGradient id="btnsel" x1="0" y1="0" x2="0" y2="1"><stop offset="0" stop-color="#1c1c1c"/><stop offset="1" stop-color="#2a2a2a"/></linearGradient>
<linearGradient id="nav" x1="0" y1="0" x2="0" y2="1"><stop offset="0" stop-color="#c4c4c4"/><stop offset="0.08" stop-color="#b0b0b0"/><stop offset="0.55" stop-color="#9e9e9e"/><stop offset="1" stop-color="#858585"/></linearGradient>
<linearGradient id="nav2" x1="0" y1="0" x2="0" y2="1"><stop offset="0" stop-color="#6e6e6e"/><stop offset="1" stop-color="#4a4a4a"/></linearGradient>
<linearGradient id="icorow" x1="0" y1="0" x2="0" y2="1"><stop offset="0" stop-color="#363636"/><stop offset="0.35" stop-color="#464646"/><stop offset="0.75" stop-color="#868686"/><stop offset="1" stop-color="#6a6a6a"/></linearGradient>
<linearGradient id="icoc" x1="0" y1="0" x2="0" y2="1"><stop offset="0" stop-color="#6a6a6a"/><stop offset="1" stop-color="#a0a0a0"/></linearGradient>
<linearGradient id="navc" x1="0" y1="0" x2="0" y2="1"><stop offset="0" stop-color="#7e7e7e"/><stop offset="1" stop-color="#aaaaaa"/></linearGradient>
</defs>
<rect x="0.00" y="0.00" width="1920.00" height="1058.00" fill="#222222"/>
<rect x="0.00" y="0.00" width="1920.00" height="17.30" fill="#00b4c5"/>
<rect x="0.00" y="16.00" width="1920.00" height="1.10" fill="#00c6d6"/>
<rect x="150.00" y="66.30" width="1770.00" height="991.70" fill="#333333"/>
<path d="M0 43.5 H144.5 Q150 43.5 150 49 V1058 H0 Z" fill="#565656"/><rect x="149" y="50" width="1" height="1008" fill="#606060"/><rect x="150" y="66" width="0.7" height="992" fill="#2a2a2a"/>
<circle cx="7.5" cy="8.3" r="5.6" fill="#0a0a0a" stroke="#5a3a8a" stroke-width="0.8"/>
<text x="7.5" y="10.6" font-size="5.6" fill="#ffffff" text-anchor="middle" textLength="7.6" lengthAdjust="spacingAndGlyphs" font-weight="bold">CM</text>
<text x="17.7" y="11.9" font-size="9.4" fill="#000000" textLength="256.3" lengthAdjust="spacingAndGlyphs" stroke="#000000" stroke-width="0.15">CalMAN 2019 CalMAN Ultimate for Business 116 Days Remaining</text>
<line x1="1828.50" y1="8.00" x2="1838.00" y2="8.00" stroke="#10282c" stroke-width="1"/>
<rect x="1863" y="5.5" width="6.5" height="6.5" fill="none" stroke="#10282c" stroke-width="1"/>
<path d="M1865 5.5 V3.5 H1871.5 V10 H1869.5" fill="none" stroke="#10282c" stroke-width="1"/>
<path d="M1897.5 4 L1905.5 12 M1905.5 4 L1897.5 12" stroke="#10282c" stroke-width="1.1" fill="none"/>
<path d="M1 17 H136.5 V35 Q136.5 39 132.5 39 H5 Q1 39 1 35 Z" fill="url(#logo)" stroke="#8a1014" stroke-width="0.8"/>
<text x="9.4" y="35.6" font-size="22.3" fill="#ffffff" textLength="98.0" lengthAdjust="spacingAndGlyphs" stroke="#ffffff" stroke-width="0.75">CalMAN</text>
<circle cx="124.5" cy="28" r="7" fill="#c8161d" stroke="#e8484e" stroke-width="0.6" stroke-opacity="0.5"/>
<path d="M121 26.5 H128 L124.5 30.5 Z" fill="#ffffff"/>
<rect x="142.00" y="25.60" width="1778.00" height="1.00" fill="url(#rainbow)" opacity="0.35"/>
<rect x="142.00" y="26.60" width="1778.00" height="3.60" fill="url(#rainbow)"/>
<rect x="142.00" y="30.20" width="1778.00" height="1.00" fill="url(#rainbow)" opacity="0.35"/>
<circle cx="14" cy="54.5" r="7" fill="url(#knob)"/>
<circle cx="13.8" cy="53.8" r="2.6" fill="#9a9a9a"/>
<circle cx="135.5" cy="54.5" r="7" fill="url(#knob)"/>
<path d="M137.5 50.5 V58 L133.3 54.2 Z" fill="#f0f0f0"/>
<text x="6.4" y="75.6" font-size="10.7" fill="#f0f0f0" textLength="48.2" lengthAdjust="spacingAndGlyphs">SDR Toolkit</text>
<rect x="7.00" y="79.00" width="136.00" height="188.00" fill="url(#tree)"/>
<rect x="7.00" y="79.00" width="136.00" height="3.00" fill="url(#treetop)"/>
<rect x="31.00" y="152.30" width="62.00" height="10.70" fill="#e6e6e6"/>
<text x="21.7" y="93.1" font-size="8.8" fill="#f4f4f4" textLength="35.0" lengthAdjust="spacingAndGlyphs" font-weight="bold">Welcome</text>
<text x="31.3" y="105.1" font-size="8.8" fill="#f4f4f4" textLength="34.4" lengthAdjust="spacingAndGlyphs">Welcome</text>
<text x="31.3" y="115.8" font-size="8.8" fill="#f4f4f4" textLength="28.7" lengthAdjust="spacingAndGlyphs">Options</text>
<text x="21.7" y="127.1" font-size="8.8" fill="#f4f4f4" textLength="30.6" lengthAdjust="spacingAndGlyphs" font-weight="bold">Analysis</text>
<text x="31.3" y="139.1" font-size="8.8" fill="#f4f4f4" textLength="56.4" lengthAdjust="spacingAndGlyphs">Dynamic Range</text>
<text x="31.3" y="149.8" font-size="8.8" fill="#f4f4f4" textLength="54.4" lengthAdjust="spacingAndGlyphs">Grayscale - 2pt</text>
<text x="31.3" y="160.6" font-size="8.8" fill="#3a3a3a" textLength="61.0" lengthAdjust="spacingAndGlyphs">Grayscale - Multi</text>
<text x="31.3" y="172.1" font-size="8.8" fill="#f4f4f4" textLength="46.4" lengthAdjust="spacingAndGlyphs">Color Gamut</text>
<text x="31.3" y="182.6" font-size="8.8" fill="#f4f4f4" textLength="26.0" lengthAdjust="spacingAndGlyphs">3D LUT</text>
<text x="31.3" y="193.8" font-size="8.8" fill="#f4f4f4" textLength="48.7" lengthAdjust="spacingAndGlyphs">ColorChecker</text>
<text x="31.3" y="204.8" font-size="8.8" fill="#f4f4f4" textLength="67.7" lengthAdjust="spacingAndGlyphs">Saturation Sweeps</text>
<text x="31.3" y="215.6" font-size="8.8" fill="#f4f4f4" textLength="69.7" lengthAdjust="spacingAndGlyphs">Luminance Sweeps</text>
<text x="31.3" y="226.8" font-size="8.8" fill="#f4f4f4" textLength="66.4" lengthAdjust="spacingAndGlyphs">Screen Uniformity</text>
<text x="31.3" y="238.1" font-size="8.8" fill="#f4f4f4" textLength="64.4" lengthAdjust="spacingAndGlyphs">Screen Angularity</text>
<text x="31.3" y="248.8" font-size="8.8" fill="#f4f4f4" textLength="56.4" lengthAdjust="spacingAndGlyphs">Screen Stability</text>
<text x="31.3" y="259.8" font-size="8.8" fill="#f4f4f4" textLength="73.0" lengthAdjust="spacingAndGlyphs">Spectral Power Dist.</text>
<path d="M15 91.5 L17.5 89 V91.5 Z" fill="#6a6a6a"/><path d="M15 125.5 L17.5 123 V125.5 Z" fill="#6a6a6a"/>
<path d="M151 66.3 V47 Q151 43.5 154.5 43.5 H214.5 Q218.5 43.5 218.5 47.5 V66.3 Z" fill="url(#tab)"/>
<path d="M151.3 66.3 V47 Q151.3 43.8 154.5 43.8 H214.5 Q218.2 43.8 218.2 47.5 V66.3" fill="none" stroke="#6c6c6c" stroke-width="1"/>
<line x1="193.70" y1="44.00" x2="193.70" y2="66.00" stroke="#6c6c6c" stroke-width="1.2"/>
<text x="154.6" y="58.8" font-size="9.4" fill="#f0f0f0" textLength="35.0" lengthAdjust="spacingAndGlyphs">History 1</text>
<circle cx="205.5" cy="56" r="7" fill="#383838"/>
<text x="205.5" y="59.4" font-size="9.5" fill="#a8a8a8" text-anchor="middle">+</text>
<path d="M1551 66 V46.5 Q1551 43.3 1554.2 43.3 H1655.0 Q1658.2 43.3 1658.2 46.5 V66 Z" fill="url(#tb)"/>
<path d="M1551.5 66 V46.5 Q1551.5 44 1553.6 44 H1555.2 V66 Z" fill="#10e410"/>
<text x="1557.4" y="52.6" font-size="8.9" fill="#f4f4f4" textLength="49.3" lengthAdjust="spacingAndGlyphs">X-Rite i1Pro 2</text>
<text x="1557.4" y="62.9" font-size="8.9" fill="#f4f4f4" textLength="41.6" lengthAdjust="spacingAndGlyphs">Direct View</text>
<circle cx="1616.8" cy="55" r="7.2" fill="url(#ddc)"/>
<path d="M1613.5 53.8 H1620.1 L1616.8 57.6 Z" fill="#f4f4f4"/>
<line x1="1631.50" y1="45.50" x2="1631.50" y2="66.00" stroke="#4a4a4a" stroke-width="1"/>
<circle cx="1646.5" cy="54.5" r="9.3" fill="#0000f0" stroke="#ffffff" stroke-width="0.9"/>
<text x="1646.5" y="57.1" font-size="7" fill="#ffffff" text-anchor="middle" textLength="11.5" lengthAdjust="spacingAndGlyphs" font-weight="bold">239</text>
<path d="M1662.3 66 V46.5 Q1662.3 43.3 1665.5 43.3 H1756.5 Q1759.7 43.3 1759.7 46.5 V66 Z" fill="url(#tb)"/>
<path d="M1662.8 66 V46.5 Q1662.8 44 1664.8999999999999 44 H1666.5 V66 Z" fill="#f0f000"/>
<text x="1669.0" y="52.6" font-size="8.9" fill="#f4f4f4" textLength="24.8" lengthAdjust="spacingAndGlyphs">Source</text>
<circle cx="1747.8" cy="55" r="7.2" fill="url(#ddc)"/>
<path d="M1744.5 53.8 H1751.1 L1747.8 57.6 Z" fill="#f4f4f4"/>
<path d="M1764.3 66 V46.5 Q1764.3 43.3 1767.5 43.3 H1868.8 Q1872 43.3 1872 46.5 V66 Z" fill="url(#tb)"/>
<path d="M1764.8 66 V46.5 Q1764.8 44 1766.8999999999999 44 H1768.5 V66 Z" fill="#f0f000"/>
<text x="1771.2" y="52.6" font-size="8.9" fill="#f4f4f4" textLength="79.0" lengthAdjust="spacingAndGlyphs">Direct Display Control</text>
<circle cx="1860" cy="55" r="7.2" fill="url(#ddc)"/>
<path d="M1856.7 53.8 H1863.3 L1860 57.6 Z" fill="#f4f4f4"/>
<rect x="1860.00" y="40.20" width="2.00" height="2.20" fill="#18b818"/>
<rect x="1874.50" y="40.20" width="2.50" height="2.20" fill="#18b818"/>
<rect x="1884.00" y="40.20" width="0.80" height="2.20" fill="#18b818"/>
<rect x="1890.00" y="40.20" width="2.50" height="2.20" fill="#18b818"/>
<rect x="1897.00" y="40.20" width="2.50" height="2.20" fill="#18b818"/>
<rect x="1874.3" y="43.6" width="25" height="21" rx="3" fill="url(#gb)" stroke="#9a9a9a" stroke-width="0.7"/>
<rect x="1900" y="43.6" width="25" height="21" rx="3" fill="url(#gb)" stroke="#9a9a9a" stroke-width="0.7"/>
<line x1="1890.00" y1="54.00" x2="1892.10" y2="54.00" stroke="#f0f0f0" stroke-width="1.7"/><line x1="1889.06" y1="56.26" x2="1890.55" y2="57.75" stroke="#f0f0f0" stroke-width="1.7"/><line x1="1886.80" y1="57.20" x2="1886.80" y2="59.30" stroke="#f0f0f0" stroke-width="1.7"/><line x1="1884.54" y1="56.26" x2="1883.05" y2="57.75" stroke="#f0f0f0" stroke-width="1.7"/><line x1="1883.60" y1="54.00" x2="1881.50" y2="54.00" stroke="#f0f0f0" stroke-width="1.7"/><line x1="1884.54" y1="51.74" x2="1883.05" y2="50.25" stroke="#f0f0f0" stroke-width="1.7"/><line x1="1886.80" y1="50.80" x2="1886.80" y2="48.70" stroke="#f0f0f0" stroke-width="1.7"/><line x1="1889.06" y1="51.74" x2="1890.55" y2="50.25" stroke="#f0f0f0" stroke-width="1.7"/>
<circle cx="1886.8" cy="54" r="3.1" fill="none" stroke="#f0f0f0" stroke-width="1.5"/>
<circle cx="1914" cy="54" r="6.6" fill="#5a5a5a" opacity="0.8"/>
<path d="M1916 50.3 V57.7 L1911.5 54 Z" fill="#f4f4f4"/>
<text x="157.4" y="124.2" font-size="49" fill="#f2f2f2" textLength="321.0" lengthAdjust="spacingAndGlyphs">Grayscale - Multi</text>
<text x="266.5" y="177.8" font-size="23" fill="#f2f2f2" textLength="114.5" lengthAdjust="spacingAndGlyphs">dE Formula:</text>
<rect x="390" y="154" width="156.5" height="29.3" rx="1.5" fill="url(#dd)" stroke="#2c2c2c" stroke-width="1"/>
<text x="395.0" y="178.3" font-size="18.6" fill="#f2f2f2" textLength="36.7" lengthAdjust="spacingAndGlyphs">2000</text>
<path d="M530.8 166 H541.2 L536 173.6 Z" fill="#0c0c0c"/>
<text x="349.4" y="214.9" font-size="16.6" fill="#e4e4e4" text-anchor="middle" textLength="83.8" lengthAdjust="spacingAndGlyphs">DeltaE 2000</text>
<rect x="204.00" y="221.00" width="323.00" height="266.00" fill="#232323"/>
<line x1="245.90" y1="221.00" x2="245.90" y2="487.00" stroke="#969696" stroke-width="1"/>
<line x1="288.90" y1="221.00" x2="288.90" y2="487.00" stroke="#969696" stroke-width="1"/>
<line x1="332.20" y1="221.00" x2="332.20" y2="487.00" stroke="#969696" stroke-width="1"/>
<line x1="375.80" y1="221.00" x2="375.80" y2="487.00" stroke="#969696" stroke-width="1"/>
<line x1="419.20" y1="221.00" x2="419.20" y2="487.00" stroke="#969696" stroke-width="1"/>
<line x1="460.60" y1="221.00" x2="460.60" y2="487.00" stroke="#969696" stroke-width="1"/>
<line x1="504.10" y1="221.00" x2="504.10" y2="487.00" stroke="#969696" stroke-width="1"/>
<rect x="204" y="221" width="323" height="266" fill="none" stroke="#9c9c9c" stroke-width="1.4"/>
<line x1="203.60" y1="487.00" x2="203.60" y2="492.50" stroke="#d8d8d8" stroke-width="1"/>
<text x="203.1" y="511.8" font-size="16.6" fill="#e4e4e4" text-anchor="middle" textLength="8.4" lengthAdjust="spacingAndGlyphs">0</text>
<line x1="245.90" y1="487.00" x2="245.90" y2="492.50" stroke="#d8d8d8" stroke-width="1"/>
<text x="245.4" y="511.8" font-size="16.6" fill="#e4e4e4" text-anchor="middle" textLength="8.4" lengthAdjust="spacingAndGlyphs">2</text>
<line x1="288.90" y1="487.00" x2="288.90" y2="492.50" stroke="#d8d8d8" stroke-width="1"/>
<text x="288.4" y="511.8" font-size="16.6" fill="#e4e4e4" text-anchor="middle" textLength="8.4" lengthAdjust="spacingAndGlyphs">4</text>
<line x1="332.20" y1="487.00" x2="332.20" y2="492.50" stroke="#d8d8d8" stroke-width="1"/>
<text x="331.7" y="511.8" font-size="16.6" fill="#e4e4e4" text-anchor="middle" textLength="8.4" lengthAdjust="spacingAndGlyphs">6</text>
<line x1="375.80" y1="487.00" x2="375.80" y2="492.50" stroke="#d8d8d8" stroke-width="1"/>
<text x="375.3" y="511.8" font-size="16.6" fill="#e4e4e4" text-anchor="middle" textLength="8.4" lengthAdjust="spacingAndGlyphs">8</text>
<line x1="419.20" y1="487.00" x2="419.20" y2="492.50" stroke="#d8d8d8" stroke-width="1"/>
<text x="418.7" y="511.8" font-size="16.6" fill="#e4e4e4" text-anchor="middle" textLength="16.8" lengthAdjust="spacingAndGlyphs">10</text>
<line x1="460.60" y1="487.00" x2="460.60" y2="492.50" stroke="#d8d8d8" stroke-width="1"/>
<text x="460.1" y="511.8" font-size="16.6" fill="#e4e4e4" text-anchor="middle" textLength="16.8" lengthAdjust="spacingAndGlyphs">12</text>
<line x1="504.10" y1="487.00" x2="504.10" y2="492.50" stroke="#d8d8d8" stroke-width="1"/>
<text x="503.6" y="511.8" font-size="16.6" fill="#e4e4e4" text-anchor="middle" textLength="16.8" lengthAdjust="spacingAndGlyphs">14</text>
<rect x="205.50" y="465.80" width="22.64" height="16.60" fill="#000000" opacity="0.9"/>
<rect x="204.70" y="465.00" width="21.84" height="16.2" fill="url(#b0)" stroke="#000000" stroke-width="1.1"/>
<text x="197.2" y="479.6" font-size="15.8" fill="#e4e4e4" text-anchor="end" textLength="8.4" lengthAdjust="spacingAndGlyphs">0</text>
<rect x="205.50" y="441.80" width="50.45" height="16.60" fill="#000000" opacity="0.9"/>
<rect x="204.70" y="441.00" width="49.65" height="16.2" fill="url(#b1)" stroke="#000000" stroke-width="1.1"/>
<text x="197.2" y="455.6" font-size="15.8" fill="#e4e4e4" text-anchor="end" textLength="16.9" lengthAdjust="spacingAndGlyphs">10</text>
<rect x="205.50" y="417.80" width="74.18" height="16.60" fill="#000000" opacity="0.9"/>
<rect x="204.70" y="417.00" width="73.38" height="16.2" fill="url(#b2)" stroke="#000000" stroke-width="1.1"/>
<text x="197.2" y="431.6" font-size="15.8" fill="#e4e4e4" text-anchor="end" textLength="16.9" lengthAdjust="spacingAndGlyphs">20</text>
<rect x="205.50" y="393.80" width="99.28" height="16.60" fill="#000000" opacity="0.9"/>
<rect x="204.70" y="393.00" width="98.48" height="16.2" fill="url(#b3)" stroke="#000000" stroke-width="1.1"/>
<text x="197.2" y="407.6" font-size="15.8" fill="#e4e4e4" text-anchor="end" textLength="16.9" lengthAdjust="spacingAndGlyphs">30</text>
<rect x="205.50" y="369.80" width="133.82" height="16.60" fill="#000000" opacity="0.9"/>
<rect x="204.70" y="369.00" width="133.02" height="16.2" fill="url(#b4)" stroke="#000000" stroke-width="1.1"/>
<text x="197.2" y="383.6" font-size="15.8" fill="#e4e4e4" text-anchor="end" textLength="16.9" lengthAdjust="spacingAndGlyphs">40</text>
<rect x="205.50" y="345.80" width="151.37" height="16.60" fill="#000000" opacity="0.9"/>
<rect x="204.70" y="345.00" width="150.57" height="16.2" fill="url(#b5)" stroke="#000000" stroke-width="1.1"/>
<text x="197.2" y="359.6" font-size="15.8" fill="#e4e4e4" text-anchor="end" textLength="16.9" lengthAdjust="spacingAndGlyphs">50</text>
<rect x="205.50" y="321.80" width="154.86" height="16.60" fill="#000000" opacity="0.9"/>
<rect x="204.70" y="321.00" width="154.06" height="16.2" fill="url(#b6)" stroke="#000000" stroke-width="1.1"/>
<text x="197.2" y="335.6" font-size="15.8" fill="#e4e4e4" text-anchor="end" textLength="16.9" lengthAdjust="spacingAndGlyphs">60</text>
<rect x="205.50" y="297.80" width="167.67" height="16.60" fill="#000000" opacity="0.9"/>
<rect x="204.70" y="297.00" width="166.87" height="16.2" fill="url(#b7)" stroke="#000000" stroke-width="1.1"/>
<text x="197.2" y="311.6" font-size="15.8" fill="#e4e4e4" text-anchor="end" textLength="16.9" lengthAdjust="spacingAndGlyphs">70</text>
<rect x="205.50" y="273.80" width="175.45" height="16.60" fill="#000000" opacity="0.9"/>
<rect x="204.70" y="273.00" width="174.65" height="16.2" fill="url(#b8)" stroke="#000000" stroke-width="1.1"/>
<text x="197.2" y="287.6" font-size="15.8" fill="#e4e4e4" text-anchor="end" textLength="16.9" lengthAdjust="spacingAndGlyphs">80</text>
<rect x="205.50" y="249.80" width="183.59" height="16.60" fill="#000000" opacity="0.9"/>
<rect x="204.70" y="249.00" width="182.79" height="16.2" fill="url(#b9)" stroke="#000000" stroke-width="1.1"/>
<text x="197.2" y="263.6" font-size="15.8" fill="#e4e4e4" text-anchor="end" textLength="16.9" lengthAdjust="spacingAndGlyphs">90</text>
<rect x="205.50" y="225.80" width="187.19" height="16.60" fill="#000000" opacity="0.9"/>
<rect x="204.70" y="225.00" width="186.39" height="16.2" fill="url(#b10)" stroke="#000000" stroke-width="1.1"/>
<text x="197.2" y="239.6" font-size="15.8" fill="#e4e4e4" text-anchor="end" textLength="25.3" lengthAdjust="spacingAndGlyphs">100</text>
<line x1="197.30" y1="221.30" x2="203.00" y2="221.30" stroke="#e8e8e8" stroke-width="1.6"/>
<line x1="197.30" y1="245.45" x2="203.00" y2="245.45" stroke="#e8e8e8" stroke-width="1.6"/>
<line x1="197.30" y1="269.60" x2="203.00" y2="269.60" stroke="#e8e8e8" stroke-width="1.6"/>
<line x1="197.30" y1="293.75" x2="203.00" y2="293.75" stroke="#e8e8e8" stroke-width="1.6"/>
<line x1="197.30" y1="317.90" x2="203.00" y2="317.90" stroke="#e8e8e8" stroke-width="1.6"/>
<line x1="197.30" y1="342.05" x2="203.00" y2="342.05" stroke="#e8e8e8" stroke-width="1.6"/>
<line x1="197.30" y1="366.20" x2="203.00" y2="366.20" stroke="#e8e8e8" stroke-width="1.6"/>
<line x1="197.30" y1="390.35" x2="203.00" y2="390.35" stroke="#e8e8e8" stroke-width="1.6"/>
<line x1="197.30" y1="414.50" x2="203.00" y2="414.50" stroke="#e8e8e8" stroke-width="1.6"/>
<line x1="197.30" y1="438.65" x2="203.00" y2="438.65" stroke="#e8e8e8" stroke-width="1.6"/>
<line x1="197.30" y1="462.80" x2="203.00" y2="462.80" stroke="#e8e8e8" stroke-width="1.6"/>
<line x1="197.30" y1="486.95" x2="203.00" y2="486.95" stroke="#e8e8e8" stroke-width="1.6"/>
<text x="887.0" y="113.2" font-size="16.6" fill="#e4e4e4" text-anchor="middle" textLength="87.4" lengthAdjust="spacingAndGlyphs">RGB Balance</text>
<rect x="597.00" y="121.00" width="608.20" height="366.00" fill="#232323"/>
<line x1="590.80" y1="120.90" x2="597.00" y2="120.90" stroke="#e2e2e2" stroke-width="1.6"/>
<text x="590.2" y="127.1" font-size="16.2" fill="#e4e4e4" text-anchor="end" textLength="17.0" lengthAdjust="spacingAndGlyphs">40</text>
<line x1="597.00" y1="166.50" x2="1205.20" y2="166.50" stroke="#969696" stroke-width="1.2"/>
<line x1="590.80" y1="166.80" x2="597.00" y2="166.80" stroke="#e2e2e2" stroke-width="1.6"/>
<text x="590.2" y="173.0" font-size="16.2" fill="#e4e4e4" text-anchor="end" textLength="17.0" lengthAdjust="spacingAndGlyphs">30</text>
<line x1="597.00" y1="211.80" x2="1205.20" y2="211.80" stroke="#969696" stroke-width="1.2"/>
<line x1="590.80" y1="212.10" x2="597.00" y2="212.10" stroke="#e2e2e2" stroke-width="1.6"/>
<text x="590.2" y="218.3" font-size="16.2" fill="#e4e4e4" text-anchor="end" textLength="17.0" lengthAdjust="spacingAndGlyphs">20</text>
<line x1="597.00" y1="257.10" x2="1205.20" y2="257.10" stroke="#969696" stroke-width="1.2"/>
<line x1="590.80" y1="257.40" x2="597.00" y2="257.40" stroke="#e2e2e2" stroke-width="1.6"/>
<text x="590.2" y="263.6" font-size="16.2" fill="#e4e4e4" text-anchor="end" textLength="17.0" lengthAdjust="spacingAndGlyphs">10</text>
<line x1="597.00" y1="304.60" x2="1205.20" y2="304.60" stroke="#969696" stroke-width="1.2"/>
<line x1="590.80" y1="304.90" x2="597.00" y2="304.90" stroke="#e2e2e2" stroke-width="1.6"/>
<text x="590.2" y="311.1" font-size="16.2" fill="#e4e4e4" text-anchor="end" textLength="8.5" lengthAdjust="spacingAndGlyphs">0</text>
<line x1="597.00" y1="350.20" x2="1205.20" y2="350.20" stroke="#969696" stroke-width="1.2"/>
<line x1="590.80" y1="350.50" x2="597.00" y2="350.50" stroke="#e2e2e2" stroke-width="1.6"/>
<text x="590.2" y="356.7" font-size="16.2" fill="#e4e4e4" text-anchor="end" textLength="22.0" lengthAdjust="spacingAndGlyphs">-10</text>
<line x1="597.00" y1="395.80" x2="1205.20" y2="395.80" stroke="#969696" stroke-width="1.2"/>
<line x1="590.80" y1="396.10" x2="597.00" y2="396.10" stroke="#e2e2e2" stroke-width="1.6"/>
<text x="590.2" y="402.3" font-size="16.2" fill="#e4e4e4" text-anchor="end" textLength="22.0" lengthAdjust="spacingAndGlyphs">-20</text>
<line x1="597.00" y1="442.00" x2="1205.20" y2="442.00" stroke="#969696" stroke-width="1.2"/>
<line x1="590.80" y1="442.30" x2="597.00" y2="442.30" stroke="#e2e2e2" stroke-width="1.6"/>
<text x="590.2" y="448.5" font-size="16.2" fill="#e4e4e4" text-anchor="end" textLength="22.0" lengthAdjust="spacingAndGlyphs">-30</text>
<line x1="590.80" y1="487.30" x2="597.00" y2="487.30" stroke="#e2e2e2" stroke-width="1.6"/>
<text x="590.2" y="493.5" font-size="16.2" fill="#e4e4e4" text-anchor="end" textLength="22.0" lengthAdjust="spacingAndGlyphs">-40</text>
<rect x="597" y="120.5" width="608.2" height="366.5" fill="none" stroke="#9c9c9c" stroke-width="1.6"/>
<line x1="596.20" y1="120.10" x2="1206.00" y2="120.10" stroke="#a8a8a8" stroke-width="2.2"/>
<line x1="597.00" y1="487.00" x2="597.00" y2="493.00" stroke="#d8d8d8" stroke-width="1"/>
<text x="596.7" y="511.8" font-size="16.6" fill="#e4e4e4" text-anchor="middle" textLength="8.4" lengthAdjust="spacingAndGlyphs">0</text>
<line x1="657.70" y1="487.00" x2="657.70" y2="493.00" stroke="#d8d8d8" stroke-width="1"/>
<text x="657.4" y="511.8" font-size="16.6" fill="#e4e4e4" text-anchor="middle" textLength="16.8" lengthAdjust="spacingAndGlyphs">10</text>
<line x1="718.40" y1="487.00" x2="718.40" y2="493.00" stroke="#d8d8d8" stroke-width="1"/>
<text x="718.1" y="511.8" font-size="16.6" fill="#e4e4e4" text-anchor="middle" textLength="16.8" lengthAdjust="spacingAndGlyphs">20</text>
<line x1="779.10" y1="487.00" x2="779.10" y2="493.00" stroke="#d8d8d8" stroke-width="1"/>
<text x="778.8" y="511.8" font-size="16.6" fill="#e4e4e4" text-anchor="middle" textLength="16.8" lengthAdjust="spacingAndGlyphs">30</text>
<line x1="839.80" y1="487.00" x2="839.80" y2="493.00" stroke="#d8d8d8" stroke-width="1"/>
<text x="839.5" y="511.8" font-size="16.6" fill="#e4e4e4" text-anchor="middle" textLength="16.8" lengthAdjust="spacingAndGlyphs">40</text>
<line x1="900.50" y1="487.00" x2="900.50" y2="493.00" stroke="#d8d8d8" stroke-width="1"/>
<text x="900.2" y="511.8" font-size="16.6" fill="#e4e4e4" text-anchor="middle" textLength="16.8" lengthAdjust="spacingAndGlyphs">50</text>
<line x1="961.20" y1="487.00" x2="961.20" y2="493.00" stroke="#d8d8d8" stroke-width="1"/>
<text x="960.9" y="511.8" font-size="16.6" fill="#e4e4e4" text-anchor="middle" textLength="16.8" lengthAdjust="spacingAndGlyphs">60</text>
<line x1="1021.90" y1="487.00" x2="1021.90" y2="493.00" stroke="#d8d8d8" stroke-width="1"/>
<text x="1021.6" y="511.8" font-size="16.6" fill="#e4e4e4" text-anchor="middle" textLength="16.8" lengthAdjust="spacingAndGlyphs">70</text>
<line x1="1082.60" y1="487.00" x2="1082.60" y2="493.00" stroke="#d8d8d8" stroke-width="1"/>
<text x="1082.3" y="511.8" font-size="16.6" fill="#e4e4e4" text-anchor="middle" textLength="16.8" lengthAdjust="spacingAndGlyphs">80</text>
<line x1="1143.30" y1="487.00" x2="1143.30" y2="493.00" stroke="#d8d8d8" stroke-width="1"/>
<text x="1143.0" y="511.8" font-size="16.6" fill="#e4e4e4" text-anchor="middle" textLength="16.8" lengthAdjust="spacingAndGlyphs">90</text>
<line x1="1204.00" y1="487.00" x2="1204.00" y2="493.00" stroke="#d8d8d8" stroke-width="1"/>
<text x="1203.7" y="511.8" font-size="16.6" fill="#e4e4e4" text-anchor="middle" textLength="25.2" lengthAdjust="spacingAndGlyphs">100</text>
<polyline points="597.0,290.5 657.7,331.0 718.4,312.0 779.1,308.3 839.8,292.3 900.5,294.1 961.2,309.7 1021.9,310.7 1082.6,324.7 1143.3,339.0 1204.0,367.0" fill="none" stroke="#ff0000" stroke-width="3.1" stroke-linejoin="miter" clip-path="url(#cpA)"/>
<polyline points="597.0,283.7 657.7,310.8 718.4,284.5 779.1,273.0 839.8,247.2 900.5,242.3 961.2,251.7 1021.9,246.3 1082.6,254.2 1143.3,261.7 1204.0,282.5" fill="none" stroke="#008000" stroke-width="3.1" stroke-linejoin="miter" clip-path="url(#cpA)"/>
<polyline points="597.0,279.2 657.7,315.5 718.4,298.5 779.1,292.5 839.8,273.5 900.5,273.1 961.2,286.2 1021.9,284.3 1082.6,294.2 1143.3,303.0 1204.0,318.8" fill="none" stroke="#0000ff" stroke-width="3.1" stroke-linejoin="miter" clip-path="url(#cpA)"/>
<text x="1323.9" y="113.2" font-size="16.6" fill="#e4e4e4" text-anchor="middle" textLength="86.8" lengthAdjust="spacingAndGlyphs">RGB Balance</text>
<rect x="1269.00" y="120.70" width="138.70" height="372.80" fill="#232323"/>
<line x1="1262.80" y1="121.00" x2="1269.00" y2="121.00" stroke="#e2e2e2" stroke-width="1.6"/>
<text x="1262.3" y="127.2" font-size="16.2" fill="#e4e4e4" text-anchor="end" textLength="17.0" lengthAdjust="spacingAndGlyphs">20</text>
<line x1="1269.00" y1="167.30" x2="1407.70" y2="167.30" stroke="#969696" stroke-width="1.2"/>
<line x1="1262.80" y1="167.60" x2="1269.00" y2="167.60" stroke="#e2e2e2" stroke-width="1.6"/>
<text x="1262.3" y="173.8" font-size="16.2" fill="#e4e4e4" text-anchor="end" textLength="17.0" lengthAdjust="spacingAndGlyphs">15</text>
<line x1="1269.00" y1="213.90" x2="1407.70" y2="213.90" stroke="#969696" stroke-width="1.2"/>
<line x1="1262.80" y1="214.20" x2="1269.00" y2="214.20" stroke="#e2e2e2" stroke-width="1.6"/>
<text x="1262.3" y="220.4" font-size="16.2" fill="#e4e4e4" text-anchor="end" textLength="17.0" lengthAdjust="spacingAndGlyphs">10</text>
<line x1="1269.00" y1="260.50" x2="1407.70" y2="260.50" stroke="#969696" stroke-width="1.2"/>
<line x1="1262.80" y1="260.80" x2="1269.00" y2="260.80" stroke="#e2e2e2" stroke-width="1.6"/>
<text x="1262.3" y="267.0" font-size="16.2" fill="#e4e4e4" text-anchor="end" textLength="8.5" lengthAdjust="spacingAndGlyphs">5</text>
<line x1="1269.00" y1="307.10" x2="1407.70" y2="307.10" stroke="#969696" stroke-width="1.2"/>
<line x1="1262.80" y1="307.40" x2="1269.00" y2="307.40" stroke="#e2e2e2" stroke-width="1.6"/>
<text x="1262.3" y="313.6" font-size="16.2" fill="#e4e4e4" text-anchor="end" textLength="8.5" lengthAdjust="spacingAndGlyphs">0</text>
<line x1="1269.00" y1="353.70" x2="1407.70" y2="353.70" stroke="#969696" stroke-width="1.2"/>
<line x1="1262.80" y1="354.00" x2="1269.00" y2="354.00" stroke="#e2e2e2" stroke-width="1.6"/>
<text x="1262.3" y="360.2" font-size="16.2" fill="#e4e4e4" text-anchor="end" textLength="13.5" lengthAdjust="spacingAndGlyphs">-5</text>
<line x1="1269.00" y1="400.30" x2="1407.70" y2="400.30" stroke="#969696" stroke-width="1.2"/>
<line x1="1262.80" y1="400.60" x2="1269.00" y2="400.60" stroke="#e2e2e2" stroke-width="1.6"/>
<text x="1262.3" y="406.8" font-size="16.2" fill="#e4e4e4" text-anchor="end" textLength="22.0" lengthAdjust="spacingAndGlyphs">-10</text>
<line x1="1269.00" y1="446.90" x2="1407.70" y2="446.90" stroke="#969696" stroke-width="1.2"/>
<line x1="1262.80" y1="447.20" x2="1269.00" y2="447.20" stroke="#e2e2e2" stroke-width="1.6"/>
<text x="1262.3" y="453.4" font-size="16.2" fill="#e4e4e4" text-anchor="end" textLength="22.0" lengthAdjust="spacingAndGlyphs">-15</text>
<line x1="1262.80" y1="493.80" x2="1269.00" y2="493.80" stroke="#e2e2e2" stroke-width="1.6"/>
<text x="1262.3" y="500.0" font-size="16.2" fill="#e4e4e4" text-anchor="end" textLength="22.0" lengthAdjust="spacingAndGlyphs">-20</text>
<rect x="1269" y="120.7" width="138.70000000000005" height="372.8" fill="none" stroke="#9c9c9c" stroke-width="1.5"/>
<line x1="1268.20" y1="120.20" x2="1408.50" y2="120.20" stroke="#a8a8a8" stroke-width="2.2"/>
<line x1="1269.00" y1="493.50" x2="1269.00" y2="500.50" stroke="#d8d8d8" stroke-width="1"/>
<line x1="1407.70" y1="493.50" x2="1407.70" y2="500.50" stroke="#d8d8d8" stroke-width="1"/>
<text x="1337.3" y="511.8" font-size="16.6" fill="#e4e4e4" text-anchor="middle" textLength="25.2" lengthAdjust="spacingAndGlyphs">100</text>
<rect x="1283.3" y="307.1" width="36" height="131.9" fill="url(#rbar)" stroke="#000" stroke-width="1.4"/>
<rect x="1320.6" y="267.2" width="36" height="39.9" fill="url(#gbar)" stroke="#000" stroke-width="1.4"/>
<rect x="1358" y="307.1" width="36.3" height="33.2" fill="url(#bbar)" stroke="#000" stroke-width="1.4"/>
<text x="1666.3" y="113.4" font-size="16.6" fill="#e4e4e4" text-anchor="middle" textLength="115.3" lengthAdjust="spacingAndGlyphs">Gamma Log/Log</text>
<rect x="1469.50" y="120.50" width="421.20" height="367.00" fill="#232323"/>
<line x1="1463.60" y1="120.80" x2="1469.50" y2="120.80" stroke="#e2e2e2" stroke-width="1.6"/>
<text x="1463.0" y="127.0" font-size="16.2" fill="#e4e4e4" text-anchor="end" textLength="21.2" lengthAdjust="spacingAndGlyphs">2.8</text>
<line x1="1469.50" y1="193.90" x2="1890.70" y2="193.90" stroke="#969696" stroke-width="1.2"/>
<line x1="1463.60" y1="194.20" x2="1469.50" y2="194.20" stroke="#e2e2e2" stroke-width="1.6"/>
<text x="1463.0" y="200.4" font-size="16.2" fill="#e4e4e4" text-anchor="end" textLength="21.2" lengthAdjust="spacingAndGlyphs">2.6</text>
<line x1="1469.50" y1="267.30" x2="1890.70" y2="267.30" stroke="#969696" stroke-width="1.2"/>
<line x1="1463.60" y1="267.60" x2="1469.50" y2="267.60" stroke="#e2e2e2" stroke-width="1.6"/>
<text x="1463.0" y="273.8" font-size="16.2" fill="#e4e4e4" text-anchor="end" textLength="21.2" lengthAdjust="spacingAndGlyphs">2.4</text>
<line x1="1469.50" y1="340.70" x2="1890.70" y2="340.70" stroke="#969696" stroke-width="1.2"/>
<line x1="1463.60" y1="341.00" x2="1469.50" y2="341.00" stroke="#e2e2e2" stroke-width="1.6"/>
<text x="1463.0" y="347.2" font-size="16.2" fill="#e4e4e4" text-anchor="end" textLength="21.2" lengthAdjust="spacingAndGlyphs">2.2</text>
<line x1="1469.50" y1="414.10" x2="1890.70" y2="414.10" stroke="#969696" stroke-width="1.2"/>
<line x1="1463.60" y1="414.40" x2="1469.50" y2="414.40" stroke="#e2e2e2" stroke-width="1.6"/>
<text x="1463.0" y="420.6" font-size="16.2" fill="#e4e4e4" text-anchor="end" textLength="8.5" lengthAdjust="spacingAndGlyphs">2</text>
<line x1="1463.60" y1="487.80" x2="1469.50" y2="487.80" stroke="#e2e2e2" stroke-width="1.6"/>
<text x="1463.0" y="494.0" font-size="16.2" fill="#e4e4e4" text-anchor="end" textLength="21.2" lengthAdjust="spacingAndGlyphs">1.8</text>
<rect x="1469.5" y="120.5" width="421.20000000000005" height="367.0" fill="none" stroke="#9c9c9c" stroke-width="1.5"/>
<line x1="1468.70" y1="120.00" x2="1891.50" y2="120.00" stroke="#a8a8a8" stroke-width="2.2"/>
<line x1="1469.50" y1="487.50" x2="1469.50" y2="493.50" stroke="#d8d8d8" stroke-width="1"/>
<text x="1469.0" y="511.8" font-size="16.6" fill="#e4e4e4" text-anchor="middle" textLength="8.4" lengthAdjust="spacingAndGlyphs">0</text>
<line x1="1553.74" y1="487.50" x2="1553.74" y2="493.50" stroke="#d8d8d8" stroke-width="1"/>
<text x="1553.2" y="511.8" font-size="16.6" fill="#e4e4e4" text-anchor="middle" textLength="16.8" lengthAdjust="spacingAndGlyphs">20</text>
<line x1="1637.98" y1="487.50" x2="1637.98" y2="493.50" stroke="#d8d8d8" stroke-width="1"/>
<text x="1637.5" y="511.8" font-size="16.6" fill="#e4e4e4" text-anchor="middle" textLength="16.8" lengthAdjust="spacingAndGlyphs">40</text>
<line x1="1722.22" y1="487.50" x2="1722.22" y2="493.50" stroke="#d8d8d8" stroke-width="1"/>
<text x="1721.7" y="511.8" font-size="16.6" fill="#e4e4e4" text-anchor="middle" textLength="16.8" lengthAdjust="spacingAndGlyphs">60</text>
<line x1="1806.46" y1="487.50" x2="1806.46" y2="493.50" stroke="#d8d8d8" stroke-width="1"/>
<text x="1806.0" y="511.8" font-size="16.6" fill="#e4e4e4" text-anchor="middle" textLength="16.8" lengthAdjust="spacingAndGlyphs">80</text>
<line x1="1890.70" y1="487.50" x2="1890.70" y2="493.50" stroke="#d8d8d8" stroke-width="1"/>
<text x="1890.2" y="511.8" font-size="16.6" fill="#e4e4e4" text-anchor="middle" textLength="25.2" lengthAdjust="spacingAndGlyphs">100</text>
<polyline points="1469.5,677.5 1511.6,392.6 1553.7,384.2 1595.9,378.6 1638.0,401.3 1680.1,407.5 1722.2,395.2 1764.3,419.7 1806.5,428.2 1848.6,470.0 1890.7,311.6" fill="none" stroke="#848484" stroke-width="3" stroke-linejoin="miter" clip-path="url(#cpG)"/>
<polyline points="1477.9,539.5 1482.1,511.7 1486.3,487.8 1490.6,468.1 1494.8,452.6 1499.0,440.0 1503.2,429.5 1507.4,420.6 1511.6,412.9 1515.8,406.1 1520.0,400.2 1524.3,394.9 1528.5,390.2 1532.7,385.9 1536.9,382.0 1541.1,378.4 1545.3,375.2 1549.5,372.1 1553.7,369.4 1558.0,366.8 1562.2,364.4 1566.4,362.1 1570.6,360.0 1574.8,358.0 1579.0,356.2 1583.2,354.4 1587.4,352.7 1591.6,351.2 1595.9,349.7 1600.1,348.3 1604.3,346.9 1608.5,345.6 1612.7,344.4 1616.9,343.2 1621.1,342.1 1625.3,341.0 1629.6,340.0 1633.8,339.0 1638.0,338.1 1642.2,337.2 1646.4,336.3 1650.6,335.4 1654.8,334.6 1659.0,333.8 1663.3,333.1 1667.5,332.3 1671.7,331.6 1675.9,330.9 1680.1,330.3 1684.3,329.6 1688.5,329.0 1692.7,328.4 1696.9,327.8 1701.2,327.2 1705.4,326.7 1709.6,326.1 1713.8,325.6 1718.0,325.1 1722.2,324.6 1726.4,324.1 1730.6,323.7 1734.9,323.2 1739.1,322.7 1743.3,322.3 1747.5,321.9 1751.7,321.5 1755.9,321.1 1760.1,320.7 1764.3,320.3 1768.6,319.9 1772.8,319.5 1777.0,319.2 1781.2,318.8 1785.4,318.4 1789.6,318.1 1793.8,317.8 1798.0,317.4 1802.2,317.1 1806.5,316.8 1810.7,316.5 1814.9,316.2 1819.1,315.9 1823.3,315.6 1827.5,315.3 1831.7,315.1 1835.9,314.8 1840.2,314.5 1844.4,314.2 1848.6,314.0 1852.8,313.7 1857.0,313.5 1861.2,313.2 1865.4,313.0 1869.6,312.8 1873.9,312.5 1878.1,312.3 1882.3,312.1 1886.5,311.8 1890.7,311.6" fill="none" stroke="#ffff00" stroke-width="3.1" stroke-linejoin="round" clip-path="url(#cpG)"/>
<text x="241.6" y="560.2" font-size="35.2" fill="#f2f2f2" textLength="229.0" lengthAdjust="spacingAndGlyphs">Avg dE2000: 6.4</text>
<text x="678.0" y="560.2" font-size="35.2" fill="#f2f2f2" textLength="201.4" lengthAdjust="spacingAndGlyphs">Avg CCT: 6738</text>
<text x="1084.5" y="560.2" font-size="35.2" fill="#f2f2f2" textLength="274.5" lengthAdjust="spacingAndGlyphs">Contrast Ratio: 684</text>
<text x="1500.3" y="560.2" font-size="35.2" fill="#f2f2f2" textLength="332.1" lengthAdjust="spacingAndGlyphs">Average Gamma: 2.011</text>
<rect x="150.60" y="583.00" width="1769.40" height="151.30" fill="#000000"/>
<line x1="251.50" y1="583.00" x2="251.50" y2="734.00" stroke="#0c0c0c" stroke-width="1"/>
<rect x="275.00" y="590.00" width="128.00" height="59.00" fill="#060709"/>
<rect x="275.00" y="649.00" width="128.00" height="59.00" fill="#000000"/>
<rect x="275.5" y="590.5" width="127.3" height="117.5" fill="none" stroke="#f6f6f6" stroke-width="1.2"/>
<text x="339.3" y="724.6" font-size="13.2" fill="#f0f0f0" text-anchor="middle" textLength="6.9" lengthAdjust="spacingAndGlyphs">0</text>
<rect x="424.00" y="590.00" width="128.00" height="59.00" fill="#1a1c1b"/>
<rect x="424.00" y="649.00" width="128.00" height="59.00" fill="#1c1c1c"/>
<rect x="424.5" y="590.5" width="127.3" height="117.5" fill="none" stroke="#f6f6f6" stroke-width="1.2"/>
<text x="488.3" y="724.6" font-size="13.2" fill="#f0f0f0" text-anchor="middle" textLength="13.8" lengthAdjust="spacingAndGlyphs">10</text>
<rect x="573.00" y="590.00" width="128.00" height="59.00" fill="#313534"/>
<rect x="573.00" y="649.00" width="128.00" height="59.00" fill="#333333"/>
<rect x="573.5" y="590.5" width="127.3" height="117.5" fill="none" stroke="#f6f6f6" stroke-width="1.2"/>
<text x="637.3" y="724.6" font-size="13.2" fill="#f0f0f0" text-anchor="middle" textLength="13.8" lengthAdjust="spacingAndGlyphs">20</text>
<rect x="722.00" y="590.00" width="128.00" height="59.00" fill="#4c5250"/>
<rect x="722.00" y="649.00" width="128.00" height="59.00" fill="#4d4d4d"/>
<rect x="722.5" y="590.5" width="127.3" height="117.5" fill="none" stroke="#f6f6f6" stroke-width="1.2"/>
<text x="786.3" y="724.6" font-size="13.2" fill="#f0f0f0" text-anchor="middle" textLength="13.8" lengthAdjust="spacingAndGlyphs">30</text>
<rect x="871.00" y="590.00" width="128.00" height="59.00" fill="#68736f"/>
<rect x="871.00" y="649.00" width="128.00" height="59.00" fill="#696969"/>
<rect x="871.5" y="590.5" width="127.3" height="117.5" fill="none" stroke="#f6f6f6" stroke-width="1.2"/>
<text x="935.3" y="724.6" font-size="13.2" fill="#f0f0f0" text-anchor="middle" textLength="13.8" lengthAdjust="spacingAndGlyphs">40</text>
<rect x="1020.00" y="590.00" width="128.00" height="59.00" fill="#818c86"/>
<rect x="1020.00" y="649.00" width="128.00" height="59.00" fill="#838383"/>
<rect x="1020.5" y="590.5" width="127.3" height="117.5" fill="none" stroke="#f6f6f6" stroke-width="1.2"/>
<text x="1084.3" y="724.6" font-size="13.2" fill="#f0f0f0" text-anchor="middle" textLength="13.8" lengthAdjust="spacingAndGlyphs">50</text>
<rect x="1169.00" y="590.00" width="128.00" height="59.00" fill="#99a59c"/>
<rect x="1169.00" y="649.00" width="128.00" height="59.00" fill="#9b9b9b"/>
<rect x="1169.5" y="590.5" width="127.3" height="117.5" fill="none" stroke="#f6f6f6" stroke-width="1.2"/>
<text x="1233.3" y="724.6" font-size="13.2" fill="#f0f0f0" text-anchor="middle" textLength="13.8" lengthAdjust="spacingAndGlyphs">60</text>
<rect x="1318.00" y="590.00" width="128.00" height="59.00" fill="#afbdb4"/>
<rect x="1318.00" y="649.00" width="128.00" height="59.00" fill="#b3b3b3"/>
<rect x="1318.5" y="590.5" width="127.3" height="117.5" fill="none" stroke="#f6f6f6" stroke-width="1.2"/>
<text x="1382.3" y="724.6" font-size="13.2" fill="#f0f0f0" text-anchor="middle" textLength="13.8" lengthAdjust="spacingAndGlyphs">70</text>
<rect x="1467.00" y="590.00" width="128.00" height="59.00" fill="#c7d6cd"/>
<rect x="1467.00" y="649.00" width="128.00" height="59.00" fill="#cdcdcd"/>
<rect x="1467.5" y="590.5" width="127.3" height="117.5" fill="none" stroke="#f6f6f6" stroke-width="1.2"/>
<text x="1531.3" y="724.6" font-size="13.2" fill="#f0f0f0" text-anchor="middle" textLength="13.8" lengthAdjust="spacingAndGlyphs">80</text>
<rect x="1616.00" y="590.00" width="128.00" height="59.00" fill="#ddebe3"/>
<rect x="1616.00" y="649.00" width="128.00" height="59.00" fill="#e6e6e6"/>
<rect x="1616.5" y="590.5" width="127.3" height="117.5" fill="none" stroke="#f6f6f6" stroke-width="1.2"/>
<text x="1680.3" y="724.6" font-size="13.2" fill="#f0f0f0" text-anchor="middle" textLength="13.8" lengthAdjust="spacingAndGlyphs">90</text>
<rect x="1765.00" y="590.00" width="128.00" height="59.00" fill="#eefff7"/>
<rect x="1765.00" y="649.00" width="128.00" height="59.00" fill="#fcfcfc"/>
<rect x="1765.5" y="590.5" width="127.3" height="117.5" fill="none" stroke="#f6f6f6" stroke-width="1.2"/>
<text x="1829.3" y="724.6" font-size="13.2" fill="#f0f0f0" text-anchor="middle" textLength="20.7" lengthAdjust="spacingAndGlyphs">100</text>
<text transform="translate(265.3,636.5) rotate(-90)" font-size="13" fill="#f0f0f0" textLength="41" lengthAdjust="spacingAndGlyphs">Actual</text>
<text transform="translate(265.3,702.5) rotate(-90)" font-size="13" fill="#f0f0f0" textLength="40.5" lengthAdjust="spacingAndGlyphs">Target</text>
<text x="172.7" y="810.9" font-size="33.8" fill="#f2f2f2" textLength="231.8" lengthAdjust="spacingAndGlyphs">Current Reading</text>
<text x="172.7" y="860.0" font-size="26" fill="#f2f2f2" textLength="108.3" lengthAdjust="spacingAndGlyphs">x: 0.3062</text>
<text x="331.5" y="860.0" font-size="26" fill="#f2f2f2" textLength="108.9" lengthAdjust="spacingAndGlyphs">y: 0.3364</text>
<text x="172.7" y="899.1" font-size="26" fill="#f2f2f2" textLength="117.3" lengthAdjust="spacingAndGlyphs">u': 0.1907</text>
<text x="331.5" y="899.1" font-size="26" fill="#f2f2f2" textLength="114.5" lengthAdjust="spacingAndGlyphs">v': 0.4713</text>
<text x="172.7" y="938.7" font-size="26" fill="#f2f2f2" textLength="197.8" lengthAdjust="spacingAndGlyphs">cd/m²: 247.0021</text>
<text x="172.7" y="977.8" font-size="26" fill="#f2f2f2" textLength="162.9" lengthAdjust="spacingAndGlyphs">ΔE 2000: 8.72</text>
<text x="652.2" y="772.8" font-size="16.6" fill="#e4e4e4" text-anchor="middle" textLength="79.7" lengthAdjust="spacingAndGlyphs">CIE 1931 xy</text>
<rect x="536.00" y="778.00" width="269.00" height="4.00" fill="url(#c0)" shape-rendering="crispEdges"/>
<rect x="536.00" y="782.00" width="269.00" height="4.00" fill="url(#c1)" shape-rendering="crispEdges"/>
<rect x="536.00" y="786.00" width="269.00" height="4.00" fill="url(#c2)" shape-rendering="crispEdges"/>
<rect x="536.00" y="790.00" width="269.00" height="4.00" fill="url(#c3)" shape-rendering="crispEdges"/>
<rect x="536.00" y="794.00" width="269.00" height="4.00" fill="url(#c4)" shape-rendering="crispEdges"/>
<rect x="536.00" y="798.00" width="269.00" height="4.00" fill="url(#c5)" shape-rendering="crispEdges"/>
<rect x="536.00" y="802.00" width="269.00" height="4.00" fill="url(#c6)" shape-rendering="crispEdges"/>
<rect x="536.00" y="806.00" width="269.00" height="4.00" fill="url(#c7)" shape-rendering="crispEdges"/>
<rect x="536.00" y="810.00" width="269.00" height="4.00" fill="url(#c8)" shape-rendering="crispEdges"/>
<rect x="536.00" y="814.00" width="269.00" height="4.00" fill="url(#c9)" shape-rendering="crispEdges"/>
<rect x="536.00" y="818.00" width="269.00" height="4.00" fill="url(#c10)" shape-rendering="crispEdges"/>
<rect x="536.00" y="822.00" width="269.00" height="4.00" fill="url(#c11)" shape-rendering="crispEdges"/>
<rect x="536.00" y="826.00" width="269.00" height="4.00" fill="url(#c12)" shape-rendering="crispEdges"/>
<rect x="536.00" y="830.00" width="269.00" height="4.00" fill="url(#c13)" shape-rendering="crispEdges"/>
<rect x="536.00" y="834.00" width="269.00" height="4.00" fill="url(#c14)" shape-rendering="crispEdges"/>
<rect x="536.00" y="838.00" width="269.00" height="4.00" fill="url(#c15)" shape-rendering="crispEdges"/>
<rect x="536.00" y="842.00" width="269.00" height="4.00" fill="url(#c16)" shape-rendering="crispEdges"/>
<rect x="536.00" y="846.00" width="269.00" height="4.00" fill="url(#c17)" shape-rendering="crispEdges"/>
<rect x="536.00" y="850.00" width="269.00" height="4.00" fill="url(#c18)" shape-rendering="crispEdges"/>
<rect x="536.00" y="854.00" width="269.00" height="4.00" fill="url(#c19)" shape-rendering="crispEdges"/>
<rect x="536.00" y="858.00" width="269.00" height="4.00" fill="url(#c20)" shape-rendering="crispEdges"/>
<rect x="536.00" y="862.00" width="269.00" height="4.00" fill="url(#c21)" shape-rendering="crispEdges"/>
<rect x="536.00" y="866.00" width="269.00" height="4.00" fill="url(#c22)" shape-rendering="crispEdges"/>
<rect x="536.00" y="870.00" width="269.00" height="4.00" fill="url(#c23)" shape-rendering="crispEdges"/>
<rect x="536.00" y="874.00" width="269.00" height="4.00" fill="url(#c24)" shape-rendering="crispEdges"/>
<rect x="536.00" y="878.00" width="269.00" height="4.00" fill="url(#c25)" shape-rendering="crispEdges"/>
<rect x="536.00" y="882.00" width="269.00" height="4.00" fill="url(#c26)" shape-rendering="crispEdges"/>
<rect x="536.00" y="886.00" width="269.00" height="4.00" fill="url(#c27)" shape-rendering="crispEdges"/>
<rect x="536.00" y="890.00" width="269.00" height="4.00" fill="url(#c28)" shape-rendering="crispEdges"/>
<rect x="536.00" y="894.00" width="269.00" height="4.00" fill="url(#c29)" shape-rendering="crispEdges"/>
<rect x="536.00" y="898.00" width="269.00" height="4.00" fill="url(#c30)" shape-rendering="crispEdges"/>
<rect x="536.00" y="902.00" width="269.00" height="4.00" fill="url(#c31)" shape-rendering="crispEdges"/>
<rect x="536.00" y="906.00" width="269.00" height="4.00" fill="url(#c32)" shape-rendering="crispEdges"/>
<rect x="536.00" y="910.00" width="269.00" height="4.00" fill="url(#c33)" shape-rendering="crispEdges"/>
<rect x="536.00" y="914.00" width="269.00" height="4.00" fill="url(#c34)" shape-rendering="crispEdges"/>
<rect x="536.00" y="918.00" width="269.00" height="4.00" fill="url(#c35)" shape-rendering="crispEdges"/>
<rect x="536.00" y="922.00" width="269.00" height="4.00" fill="url(#c36)" shape-rendering="crispEdges"/>
<rect x="536.00" y="926.00" width="269.00" height="4.00" fill="url(#c37)" shape-rendering="crispEdges"/>
<rect x="536.00" y="930.00" width="269.00" height="4.00" fill="url(#c38)" shape-rendering="crispEdges"/>
<rect x="536.00" y="934.00" width="269.00" height="4.00" fill="url(#c39)" shape-rendering="crispEdges"/>
<rect x="536.00" y="938.00" width="269.00" height="4.00" fill="url(#c40)" shape-rendering="crispEdges"/>
<rect x="536.00" y="942.00" width="269.00" height="4.00" fill="url(#c41)" shape-rendering="crispEdges"/>
<rect x="536.00" y="946.00" width="269.00" height="4.00" fill="url(#c42)" shape-rendering="crispEdges"/>
<rect x="536.00" y="950.00" width="269.00" height="4.00" fill="url(#c43)" shape-rendering="crispEdges"/>
<rect x="536.00" y="954.00" width="269.00" height="4.00" fill="url(#c44)" shape-rendering="crispEdges"/>
<rect x="536.00" y="958.00" width="269.00" height="4.00" fill="url(#c45)" shape-rendering="crispEdges"/>
<rect x="536.00" y="962.00" width="269.00" height="4.00" fill="url(#c46)" shape-rendering="crispEdges"/>
<rect x="536.00" y="966.00" width="269.00" height="4.00" fill="url(#c47)" shape-rendering="crispEdges"/>
<rect x="536.7" y="778.7" width="267.69999999999993" height="191.29999999999995" fill="none" stroke="#a0a0a0" stroke-width="1.3"/>
<path d="M568 972.5 Q676 893 805.5 809.5" fill="none" stroke="#000000" stroke-width="3.6" clip-path="url(#cpC)"/>
<line x1="548.88" y1="970.00" x2="548.88" y2="976.00" stroke="#d8d8d8" stroke-width="1"/>
<text x="548.9" y="995.5" font-size="16.6" fill="#e4e4e4" text-anchor="middle" textLength="30.5" lengthAdjust="spacingAndGlyphs">0.29</text>
<line x1="602.30" y1="970.00" x2="602.30" y2="976.00" stroke="#d8d8d8" stroke-width="1"/>
<text x="602.3" y="995.5" font-size="16.6" fill="#e4e4e4" text-anchor="middle" textLength="21.5" lengthAdjust="spacingAndGlyphs">0.3</text>
<line x1="655.72" y1="970.00" x2="655.72" y2="976.00" stroke="#d8d8d8" stroke-width="1"/>
<text x="655.7" y="995.5" font-size="16.6" fill="#e4e4e4" text-anchor="middle" textLength="30.5" lengthAdjust="spacingAndGlyphs">0.31</text>
<line x1="709.14" y1="970.00" x2="709.14" y2="976.00" stroke="#d8d8d8" stroke-width="1"/>
<text x="709.1" y="995.5" font-size="16.6" fill="#e4e4e4" text-anchor="middle" textLength="30.5" lengthAdjust="spacingAndGlyphs">0.32</text>
<line x1="762.56" y1="970.00" x2="762.56" y2="976.00" stroke="#d8d8d8" stroke-width="1"/>
<text x="762.6" y="995.5" font-size="16.6" fill="#e4e4e4" text-anchor="middle" textLength="30.5" lengthAdjust="spacingAndGlyphs">0.33</text>
<line x1="530.50" y1="833.50" x2="536.70" y2="833.50" stroke="#d8d8d8" stroke-width="1.1"/>
<text x="530.3" y="839.1" font-size="16.2" fill="#e4e4e4" text-anchor="end" textLength="30.0" lengthAdjust="spacingAndGlyphs">0.34</text>
<line x1="530.50" y1="910.90" x2="536.70" y2="910.90" stroke="#d8d8d8" stroke-width="1.1"/>
<text x="530.3" y="916.5" font-size="16.2" fill="#e4e4e4" text-anchor="end" textLength="30.0" lengthAdjust="spacingAndGlyphs">0.32</text>
<rect x="663.6" y="865.6" width="13.6" height="14.4" fill="#ffffff" stroke="#000000" stroke-width="1.7"/>
<circle cx="617.3" cy="856.1" r="4.7" fill="#161616" stroke="#000000" stroke-width="0.9"/>
<circle cx="640.2" cy="840.2" r="4.7" fill="#333333" stroke="#000000" stroke-width="0.9"/>
<circle cx="642.4" cy="837.5" r="4.7" fill="#4c4c4c" stroke="#000000" stroke-width="0.9"/>
<circle cx="644.0" cy="836.3" r="4.7" fill="#666666" stroke="#000000" stroke-width="0.9"/>
<circle cx="644.5" cy="836.0" r="4.7" fill="#808080" stroke="#000000" stroke-width="0.9"/>
<circle cx="645.0" cy="836.0" r="4.7" fill="#999999" stroke="#000000" stroke-width="0.9"/>
<circle cx="645.0" cy="836.3" r="4.7" fill="#b2b2b2" stroke="#000000" stroke-width="0.9"/>
<circle cx="644.0" cy="837.1" r="4.7" fill="#cccccc" stroke="#000000" stroke-width="0.9"/>
<circle cx="641.8" cy="839.4" r="4.7" fill="#e6e6e6" stroke="#000000" stroke-width="0.9"/>
<circle cx="635.4" cy="845.6" r="4.7" fill="#ffffff" stroke="#000000" stroke-width="0.9"/>
<rect x="816.20" y="744.70" width="900.80" height="15.50" fill="#2d2d2d"/>
<rect x="816.20" y="760.20" width="900.80" height="12.00" fill="#191919"/>
<rect x="816.20" y="772.00" width="900.80" height="2.50" fill="#0a0a0a"/>
<rect x="816.20" y="744.70" width="10.90" height="29.80" fill="#000000"/>
<text x="941.8" y="765.2" font-size="15.4" fill="#f0f0f0" textLength="6.9" lengthAdjust="spacingAndGlyphs">0</text>
<text x="1012.6" y="765.2" font-size="15.4" fill="#f0f0f0" textLength="13.8" lengthAdjust="spacingAndGlyphs">10</text>
<text x="1083.4" y="765.2" font-size="15.4" fill="#f0f0f0" textLength="13.8" lengthAdjust="spacingAndGlyphs">20</text>
<text x="1154.2" y="765.2" font-size="15.4" fill="#f0f0f0" textLength="13.8" lengthAdjust="spacingAndGlyphs">30</text>
<text x="1225.0" y="765.2" font-size="15.4" fill="#f0f0f0" textLength="13.8" lengthAdjust="spacingAndGlyphs">40</text>
<text x="1295.8" y="765.2" font-size="15.4" fill="#f0f0f0" textLength="13.8" lengthAdjust="spacingAndGlyphs">50</text>
<text x="1366.6" y="765.2" font-size="15.4" fill="#f0f0f0" textLength="13.8" lengthAdjust="spacingAndGlyphs">60</text>
<text x="1437.4" y="765.2" font-size="15.4" fill="#f0f0f0" textLength="13.8" lengthAdjust="spacingAndGlyphs">70</text>
<text x="1508.2" y="765.2" font-size="15.4" fill="#f0f0f0" textLength="13.8" lengthAdjust="spacingAndGlyphs">80</text>
<text x="1579.0" y="765.2" font-size="15.4" fill="#f0f0f0" textLength="13.8" lengthAdjust="spacingAndGlyphs">90</text>
<text x="1649.8" y="765.2" font-size="15.4" fill="#f0f0f0" textLength="20.7" lengthAdjust="spacingAndGlyphs">100</text>
<rect x="827.00" y="774.50" width="890.00" height="26.50" fill="#424242"/>
<rect x="816.20" y="774.50" width="10.90" height="26.50" fill="url(#strip)"/>
<text x="831.0" y="794.3" font-size="17.2" fill="#f2f2f2" textLength="45.8" lengthAdjust="spacingAndGlyphs">x: CIE31</text>
<text x="941.8" y="794.3" font-size="17.2" fill="#f2f2f2" textLength="39.8" lengthAdjust="spacingAndGlyphs">0.2739</text>
<text x="1012.6" y="794.3" font-size="17.2" fill="#f2f2f2" textLength="39.8" lengthAdjust="spacingAndGlyphs">0.3028</text>
<text x="1083.4" y="794.3" font-size="17.2" fill="#f2f2f2" textLength="39.8" lengthAdjust="spacingAndGlyphs">0.3071</text>
<text x="1154.2" y="794.3" font-size="17.2" fill="#f2f2f2" textLength="39.8" lengthAdjust="spacingAndGlyphs">0.3075</text>
<text x="1225.0" y="794.3" font-size="17.2" fill="#f2f2f2" textLength="39.8" lengthAdjust="spacingAndGlyphs">0.3078</text>
<text x="1295.8" y="794.3" font-size="17.2" fill="#f2f2f2" textLength="39.8" lengthAdjust="spacingAndGlyphs">0.3079</text>
<text x="1366.6" y="794.3" font-size="17.2" fill="#f2f2f2" textLength="39.8" lengthAdjust="spacingAndGlyphs">0.3080</text>
<text x="1437.4" y="794.3" font-size="17.2" fill="#f2f2f2" textLength="39.8" lengthAdjust="spacingAndGlyphs">0.3080</text>
<text x="1508.2" y="794.3" font-size="17.2" fill="#f2f2f2" textLength="39.8" lengthAdjust="spacingAndGlyphs">0.3078</text>
<text x="1579.0" y="794.3" font-size="17.2" fill="#f2f2f2" textLength="39.8" lengthAdjust="spacingAndGlyphs">0.3074</text>
<text x="1649.8" y="794.3" font-size="17.2" fill="#f2f2f2" textLength="39.8" lengthAdjust="spacingAndGlyphs">0.3062</text>
<rect x="827.00" y="801.00" width="890.00" height="27.20" fill="#808080"/>
<rect x="827.00" y="827.20" width="890.00" height="1.00" fill="#5e5e5e"/>
<rect x="816.20" y="801.00" width="10.90" height="27.20" fill="url(#strip)"/>
<rect x="1363.40" y="801.30" width="69.50" height="26.00" fill="#f4f4f4"/>
<text x="831.0" y="820.8" font-size="17.2" fill="#f2f2f2" textLength="45.8" lengthAdjust="spacingAndGlyphs">y: CIE31</text>
<text x="941.8" y="820.8" font-size="17.2" fill="#f2f2f2" textLength="39.8" lengthAdjust="spacingAndGlyphs">0.3024</text>
<text x="1012.6" y="820.8" font-size="17.2" fill="#f2f2f2" textLength="39.8" lengthAdjust="spacingAndGlyphs">0.3337</text>
<text x="1083.4" y="820.8" font-size="17.2" fill="#f2f2f2" textLength="39.8" lengthAdjust="spacingAndGlyphs">0.3378</text>
<text x="1154.2" y="820.8" font-size="17.2" fill="#f2f2f2" textLength="39.8" lengthAdjust="spacingAndGlyphs">0.3385</text>
<text x="1225.0" y="820.8" font-size="17.2" fill="#f2f2f2" textLength="39.8" lengthAdjust="spacingAndGlyphs">0.3388</text>
<text x="1295.8" y="820.8" font-size="17.2" fill="#f2f2f2" textLength="39.8" lengthAdjust="spacingAndGlyphs">0.3389</text>
<text x="1366.6" y="820.8" font-size="17.2" fill="#181818" textLength="39.8" lengthAdjust="spacingAndGlyphs">0.3389</text>
<text x="1437.4" y="820.8" font-size="17.2" fill="#f2f2f2" textLength="39.8" lengthAdjust="spacingAndGlyphs">0.3388</text>
<text x="1508.2" y="820.8" font-size="17.2" fill="#f2f2f2" textLength="39.8" lengthAdjust="spacingAndGlyphs">0.3386</text>
<text x="1579.0" y="820.8" font-size="17.2" fill="#f2f2f2" textLength="39.8" lengthAdjust="spacingAndGlyphs">0.3380</text>
<text x="1649.8" y="820.8" font-size="17.2" fill="#f2f2f2" textLength="39.8" lengthAdjust="spacingAndGlyphs">0.3364</text>
<rect x="827.00" y="828.20" width="890.00" height="26.80" fill="#424242"/>
<rect x="816.20" y="828.20" width="10.90" height="26.80" fill="url(#strip)"/>
<text x="831.0" y="848.0" font-size="17.2" fill="#f2f2f2" textLength="6.8" lengthAdjust="spacingAndGlyphs">Y</text>
<text x="941.8" y="848.0" font-size="17.2" fill="#f2f2f2" textLength="39.8" lengthAdjust="spacingAndGlyphs">0.3613</text>
<text x="1012.6" y="848.0" font-size="17.2" fill="#f2f2f2" textLength="39.8" lengthAdjust="spacingAndGlyphs">2.2687</text>
<text x="1083.4" y="848.0" font-size="17.2" fill="#f2f2f2" textLength="39.8" lengthAdjust="spacingAndGlyphs">8.7269</text>
<text x="1154.2" y="848.0" font-size="17.2" fill="#f2f2f2" textLength="47.0" lengthAdjust="spacingAndGlyphs">19.6177</text>
<text x="1225.0" y="848.0" font-size="17.2" fill="#f2f2f2" textLength="47.0" lengthAdjust="spacingAndGlyphs">38.4265</text>
<text x="1295.8" y="848.0" font-size="17.2" fill="#f2f2f2" textLength="47.0" lengthAdjust="spacingAndGlyphs">61.6503</text>
<text x="1366.6" y="848.0" font-size="17.2" fill="#f2f2f2" textLength="47.0" lengthAdjust="spacingAndGlyphs">86.8030</text>
<text x="1437.4" y="848.0" font-size="17.2" fill="#f2f2f2" textLength="54.2" lengthAdjust="spacingAndGlyphs">121.2006</text>
<text x="1508.2" y="848.0" font-size="17.2" fill="#f2f2f2" textLength="54.2" lengthAdjust="spacingAndGlyphs">159.5946</text>
<text x="1579.0" y="848.0" font-size="17.2" fill="#f2f2f2" textLength="54.2" lengthAdjust="spacingAndGlyphs">204.2181</text>
<text x="1649.8" y="848.0" font-size="17.2" fill="#f2f2f2" textLength="54.2" lengthAdjust="spacingAndGlyphs">247.0021</text>
<rect x="827.00" y="855.00" width="890.00" height="26.80" fill="#808080"/>
<rect x="827.00" y="880.80" width="890.00" height="1.00" fill="#5e5e5e"/>
<rect x="816.20" y="855.00" width="10.90" height="26.80" fill="url(#strip)"/>
<text x="831.0" y="874.8" font-size="17.2" fill="#f2f2f2" textLength="48.7" lengthAdjust="spacingAndGlyphs">Target Y</text>
<text x="941.8" y="874.8" font-size="17.2" fill="#f2f2f2" textLength="39.8" lengthAdjust="spacingAndGlyphs">0.0000</text>
<text x="1012.6" y="874.8" font-size="17.2" fill="#f2f2f2" textLength="39.8" lengthAdjust="spacingAndGlyphs">2.5515</text>
<text x="1083.4" y="874.8" font-size="17.2" fill="#f2f2f2" textLength="39.8" lengthAdjust="spacingAndGlyphs">8.1769</text>
<text x="1154.2" y="874.8" font-size="17.2" fill="#f2f2f2" textLength="47.0" lengthAdjust="spacingAndGlyphs">17.8513</text>
<text x="1225.0" y="874.8" font-size="17.2" fill="#f2f2f2" textLength="47.0" lengthAdjust="spacingAndGlyphs">32.8188</text>
<text x="1295.8" y="874.8" font-size="17.2" fill="#f2f2f2" textLength="47.0" lengthAdjust="spacingAndGlyphs">53.3180</text>
<text x="1366.6" y="874.8" font-size="17.2" fill="#f2f2f2" textLength="47.0" lengthAdjust="spacingAndGlyphs">78.6817</text>
<text x="1437.4" y="874.8" font-size="17.2" fill="#f2f2f2" textLength="54.2" lengthAdjust="spacingAndGlyphs">109.9656</text>
<text x="1508.2" y="874.8" font-size="17.2" fill="#f2f2f2" textLength="54.2" lengthAdjust="spacingAndGlyphs">149.1466</text>
<text x="1579.0" y="874.8" font-size="17.2" fill="#f2f2f2" textLength="54.2" lengthAdjust="spacingAndGlyphs">195.4522</text>
<text x="1649.8" y="874.8" font-size="17.2" fill="#f2f2f2" textLength="54.2" lengthAdjust="spacingAndGlyphs">247.0021</text>
<rect x="827.00" y="881.80" width="890.00" height="27.00" fill="#424242"/>
<rect x="816.20" y="881.80" width="10.90" height="27.00" fill="url(#strip)"/>
<text x="831.0" y="901.6" font-size="17.2" fill="#f2f2f2" textLength="101.7" lengthAdjust="spacingAndGlyphs">Gamma Log/Log</text>
<text x="941.8" y="901.6" font-size="17.2" fill="#f2f2f2" textLength="39.8" lengthAdjust="spacingAndGlyphs">1.2778</text>
<text x="1012.6" y="901.6" font-size="17.2" fill="#f2f2f2" textLength="39.8" lengthAdjust="spacingAndGlyphs">2.0542</text>
<text x="1083.4" y="901.6" font-size="17.2" fill="#f2f2f2" textLength="39.8" lengthAdjust="spacingAndGlyphs">2.0771</text>
<text x="1154.2" y="901.6" font-size="17.2" fill="#f2f2f2" textLength="39.8" lengthAdjust="spacingAndGlyphs">2.0924</text>
<text x="1225.0" y="901.6" font-size="17.2" fill="#f2f2f2" textLength="39.8" lengthAdjust="spacingAndGlyphs">2.0306</text>
<text x="1295.8" y="901.6" font-size="17.2" fill="#f2f2f2" textLength="39.8" lengthAdjust="spacingAndGlyphs">2.0137</text>
<text x="1366.6" y="901.6" font-size="17.2" fill="#f2f2f2" textLength="39.8" lengthAdjust="spacingAndGlyphs">2.0472</text>
<text x="1437.4" y="901.6" font-size="17.2" fill="#f2f2f2" textLength="39.8" lengthAdjust="spacingAndGlyphs">1.9805</text>
<text x="1508.2" y="901.6" font-size="17.2" fill="#f2f2f2" textLength="39.8" lengthAdjust="spacingAndGlyphs">1.9573</text>
<text x="1579.0" y="901.6" font-size="17.2" fill="#f2f2f2" textLength="39.8" lengthAdjust="spacingAndGlyphs">1.8434</text>
<text x="1649.8" y="901.6" font-size="17.2" fill="#f2f2f2" textLength="39.8" lengthAdjust="spacingAndGlyphs">2.2749</text>
<rect x="827.00" y="908.80" width="890.00" height="27.00" fill="#808080"/>
<rect x="827.00" y="934.80" width="890.00" height="1.00" fill="#5e5e5e"/>
<rect x="816.20" y="908.80" width="10.90" height="27.00" fill="url(#strip)"/>
<text x="831.0" y="928.6" font-size="17.2" fill="#f2f2f2" textLength="23.2" lengthAdjust="spacingAndGlyphs">CCT</text>
<text x="941.8" y="928.6" font-size="17.2" fill="#f2f2f2" textLength="61.4" lengthAdjust="spacingAndGlyphs">9871.0000</text>
<text x="1012.6" y="928.6" font-size="17.2" fill="#f2f2f2" textLength="61.4" lengthAdjust="spacingAndGlyphs">7009.0000</text>
<text x="1083.4" y="928.6" font-size="17.2" fill="#f2f2f2" textLength="61.4" lengthAdjust="spacingAndGlyphs">6736.0000</text>
<text x="1154.2" y="928.6" font-size="17.2" fill="#f2f2f2" textLength="61.4" lengthAdjust="spacingAndGlyphs">6706.0000</text>
<text x="1225.0" y="928.6" font-size="17.2" fill="#f2f2f2" textLength="61.4" lengthAdjust="spacingAndGlyphs">6689.0000</text>
<text x="1295.8" y="928.6" font-size="17.2" fill="#f2f2f2" textLength="61.4" lengthAdjust="spacingAndGlyphs">6683.0000</text>
<text x="1366.6" y="928.6" font-size="17.2" fill="#f2f2f2" textLength="61.4" lengthAdjust="spacingAndGlyphs">6680.0000</text>
<text x="1437.4" y="928.6" font-size="17.2" fill="#f2f2f2" textLength="61.4" lengthAdjust="spacingAndGlyphs">6681.0000</text>
<text x="1508.2" y="928.6" font-size="17.2" fill="#f2f2f2" textLength="61.4" lengthAdjust="spacingAndGlyphs">6689.0000</text>
<text x="1579.0" y="928.6" font-size="17.2" fill="#f2f2f2" textLength="61.4" lengthAdjust="spacingAndGlyphs">6715.0000</text>
<text x="1649.8" y="928.6" font-size="17.2" fill="#f2f2f2" textLength="61.4" lengthAdjust="spacingAndGlyphs">6792.0000</text>
<rect x="827.00" y="935.80" width="890.00" height="26.80" fill="#424242"/>
<rect x="816.20" y="935.80" width="10.90" height="26.80" fill="url(#strip)"/>
<text x="831.0" y="955.6" font-size="17.2" fill="#f2f2f2" textLength="49.2" lengthAdjust="spacingAndGlyphs">ΔE 2000</text>
<text x="941.8" y="955.6" font-size="17.2" fill="#f2f2f2" textLength="39.8" lengthAdjust="spacingAndGlyphs">1.0714</text>
<text x="1012.6" y="955.6" font-size="17.2" fill="#f2f2f2" textLength="39.8" lengthAdjust="spacingAndGlyphs">2.3653</text>
<text x="1083.4" y="955.6" font-size="17.2" fill="#f2f2f2" textLength="39.8" lengthAdjust="spacingAndGlyphs">3.4689</text>
<text x="1154.2" y="955.6" font-size="17.2" fill="#f2f2f2" textLength="39.8" lengthAdjust="spacingAndGlyphs">4.6361</text>
<text x="1225.0" y="955.6" font-size="17.2" fill="#f2f2f2" textLength="39.8" lengthAdjust="spacingAndGlyphs">6.2428</text>
<text x="1295.8" y="955.6" font-size="17.2" fill="#f2f2f2" textLength="39.8" lengthAdjust="spacingAndGlyphs">7.0593</text>
<text x="1366.6" y="955.6" font-size="17.2" fill="#f2f2f2" textLength="39.8" lengthAdjust="spacingAndGlyphs">7.2212</text>
<text x="1437.4" y="955.6" font-size="17.2" fill="#f2f2f2" textLength="39.8" lengthAdjust="spacingAndGlyphs">7.8170</text>
<text x="1508.2" y="955.6" font-size="17.2" fill="#f2f2f2" textLength="39.8" lengthAdjust="spacingAndGlyphs">8.1792</text>
<text x="1579.0" y="955.6" font-size="17.2" fill="#f2f2f2" textLength="39.8" lengthAdjust="spacingAndGlyphs">8.5578</text>
<text x="1649.8" y="955.6" font-size="17.2" fill="#f2f2f2" textLength="39.8" lengthAdjust="spacingAndGlyphs">8.7249</text>
<rect x="827.00" y="962.60" width="890.00" height="26.70" fill="#808080"/>
<rect x="827.00" y="988.30" width="890.00" height="1.00" fill="#5e5e5e"/>
<rect x="816.20" y="962.60" width="10.90" height="26.70" fill="url(#strip)"/>
<text x="831.0" y="982.4" font-size="17.2" fill="#f2f2f2" textLength="33.0" lengthAdjust="spacingAndGlyphs">dEITP</text>
<text x="941.8" y="982.4" font-size="17.2" fill="#f2f2f2" textLength="47.0" lengthAdjust="spacingAndGlyphs">75.5661</text>
<text x="1012.6" y="982.4" font-size="17.2" fill="#f2f2f2" textLength="39.8" lengthAdjust="spacingAndGlyphs">7.1371</text>
<text x="1083.4" y="982.4" font-size="17.2" fill="#f2f2f2" textLength="39.8" lengthAdjust="spacingAndGlyphs">6.0463</text>
<text x="1154.2" y="982.4" font-size="17.2" fill="#f2f2f2" textLength="39.8" lengthAdjust="spacingAndGlyphs">7.9083</text>
<text x="1225.0" y="982.4" font-size="17.2" fill="#f2f2f2" textLength="47.0" lengthAdjust="spacingAndGlyphs">11.8124</text>
<text x="1295.8" y="982.4" font-size="17.2" fill="#f2f2f2" textLength="47.0" lengthAdjust="spacingAndGlyphs">11.5942</text>
<text x="1366.6" y="982.4" font-size="17.2" fill="#f2f2f2" textLength="39.8" lengthAdjust="spacingAndGlyphs">9.2674</text>
<text x="1437.4" y="982.4" font-size="17.2" fill="#f2f2f2" textLength="39.8" lengthAdjust="spacingAndGlyphs">9.4059</text>
<text x="1508.2" y="982.4" font-size="17.2" fill="#f2f2f2" textLength="39.8" lengthAdjust="spacingAndGlyphs">8.1020</text>
<text x="1579.0" y="982.4" font-size="17.2" fill="#f2f2f2" textLength="39.8" lengthAdjust="spacingAndGlyphs">7.3161</text>
<text x="1649.8" y="982.4" font-size="17.2" fill="#f2f2f2" textLength="39.8" lengthAdjust="spacingAndGlyphs">6.8352</text>
<rect x="150.00" y="1011.30" width="1770.00" height="46.70" fill="url(#botbg)"/>
<path d="M151.3 1057 V1015 Q151.3 1011.6 154.7 1011.6 H259.7 Q263.1 1011.6 263.1 1015 V1057 Z" fill="url(#btn)"/>
<rect x="154.5" y="1015" width="105.2" height="27" rx="2.5" fill="#000000" stroke="#1a1a1a" stroke-opacity="0.35" stroke-width="0.8"/>
<text x="206.9" y="1053.6" font-size="8.4" fill="#2a2a2a" text-anchor="middle" textLength="4.4" lengthAdjust="spacingAndGlyphs">0</text>
<path d="M265.3 1057 V1015 Q265.3 1011.6 268.7 1011.6 H373.7 Q377.1 1011.6 377.1 1015 V1057 Z" fill="url(#btn)"/>
<rect x="268.5" y="1015" width="105.2" height="27" rx="2.5" fill="#1a1a1a" stroke="#1a1a1a" stroke-opacity="0.35" stroke-width="0.8"/>
<text x="320.9" y="1053.6" font-size="8.4" fill="#2a2a2a" text-anchor="middle" textLength="8.8" lengthAdjust="spacingAndGlyphs">10</text>
<path d="M379.3 1057 V1015 Q379.3 1011.6 382.7 1011.6 H487.7 Q491.1 1011.6 491.1 1015 V1057 Z" fill="url(#btn)"/>
<rect x="382.5" y="1015" width="105.2" height="27" rx="2.5" fill="#333333" stroke="#1a1a1a" stroke-opacity="0.35" stroke-width="0.8"/>
<text x="434.9" y="1053.6" font-size="8.4" fill="#2a2a2a" text-anchor="middle" textLength="8.8" lengthAdjust="spacingAndGlyphs">20</text>
<path d="M493.3 1057 V1015 Q493.3 1011.6 496.7 1011.6 H601.7 Q605.1 1011.6 605.1 1015 V1057 Z" fill="url(#btn)"/>
<rect x="496.5" y="1015" width="105.2" height="27" rx="2.5" fill="#4c4c4c" stroke="#1a1a1a" stroke-opacity="0.35" stroke-width="0.8"/>
<text x="548.9" y="1053.6" font-size="8.4" fill="#2a2a2a" text-anchor="middle" textLength="8.8" lengthAdjust="spacingAndGlyphs">30</text>
<path d="M607.3 1057 V1015 Q607.3 1011.6 610.7 1011.6 H715.7 Q719.1 1011.6 719.1 1015 V1057 Z" fill="url(#btn)"/>
<rect x="610.5" y="1015" width="105.2" height="27" rx="2.5" fill="#666666" stroke="#1a1a1a" stroke-opacity="0.35" stroke-width="0.8"/>
<text x="662.9" y="1053.6" font-size="8.4" fill="#2a2a2a" text-anchor="middle" textLength="8.8" lengthAdjust="spacingAndGlyphs">40</text>
<path d="M721.3 1057 V1015 Q721.3 1011.6 724.7 1011.6 H829.7 Q833.1 1011.6 833.1 1015 V1057 Z" fill="url(#btn)"/>
<rect x="724.5" y="1015" width="105.2" height="27" rx="2.5" fill="#808080" stroke="#1a1a1a" stroke-opacity="0.35" stroke-width="0.8"/>
<text x="776.9" y="1053.6" font-size="8.4" fill="#2a2a2a" text-anchor="middle" textLength="8.8" lengthAdjust="spacingAndGlyphs">50</text>
<path d="M835.3 1057 V1015 Q835.3 1011.6 838.7 1011.6 H943.7 Q947.1 1011.6 947.1 1015 V1057 Z" fill="url(#btn)"/>
<rect x="838.5" y="1015" width="105.2" height="27" rx="2.5" fill="#999999" stroke="#1a1a1a" stroke-opacity="0.35" stroke-width="0.8"/>
<text x="890.9" y="1053.6" font-size="8.4" fill="#2a2a2a" text-anchor="middle" textLength="8.8" lengthAdjust="spacingAndGlyphs">60</text>
<path d="M949.3 1057 V1015 Q949.3 1011.6 952.7 1011.6 H1057.7 Q1061.1 1011.6 1061.1 1015 V1057 Z" fill="url(#btn)"/>
<rect x="952.5" y="1015" width="105.2" height="27" rx="2.5" fill="#b2b2b2" stroke="#1a1a1a" stroke-opacity="0.35" stroke-width="0.8"/>
<text x="1004.9" y="1053.6" font-size="8.4" fill="#2a2a2a" text-anchor="middle" textLength="8.8" lengthAdjust="spacingAndGlyphs">70</text>
<path d="M1063.3 1057 V1015 Q1063.3 1011.6 1066.7 1011.6 H1171.7 Q1175.1 1011.6 1175.1 1015 V1057 Z" fill="url(#btn)"/>
<rect x="1066.5" y="1015" width="105.2" height="27" rx="2.5" fill="#cccccc" stroke="#1a1a1a" stroke-opacity="0.35" stroke-width="0.8"/>
<text x="1118.9" y="1053.6" font-size="8.4" fill="#2a2a2a" text-anchor="middle" textLength="8.8" lengthAdjust="spacingAndGlyphs">80</text>
<path d="M1177.3 1057 V1015 Q1177.3 1011.6 1180.7 1011.6 H1285.7 Q1289.1 1011.6 1289.1 1015 V1057 Z" fill="url(#btn)"/>
<rect x="1180.5" y="1015" width="105.2" height="27" rx="2.5" fill="#e6e6e6" stroke="#1a1a1a" stroke-opacity="0.35" stroke-width="0.8"/>
<text x="1232.9" y="1053.6" font-size="8.4" fill="#2a2a2a" text-anchor="middle" textLength="8.8" lengthAdjust="spacingAndGlyphs">90</text>
<path d="M1291.3 1057 V1015 Q1291.3 1011.6 1294.7 1011.6 H1399.7 Q1403.1 1011.6 1403.1 1015 V1057 Z" fill="url(#btnsel)"/>
<rect x="1294.5" y="1015" width="105.2" height="27" rx="2.5" fill="#ffffff" stroke="#1a1a1a" stroke-opacity="0.35" stroke-width="0.8"/>
<text x="1346.9" y="1053.6" font-size="8.4" fill="#ffffff" text-anchor="middle" textLength="13.2" lengthAdjust="spacingAndGlyphs" font-weight="bold">100</text>
<rect x="150.00" y="1056.60" width="1255.00" height="1.40" fill="#242424"/>
<path d="M1715 1035 V1015 Q1715 1012 1718 1012 H1884 V1035 Z" fill="url(#icorow)"/>
<path d="M1884 1012 H1915 Q1918.5 1012 1918.5 1015.5 V1035 H1884 Z" fill="#2c2c2c"/>
<line x1="1749.50" y1="1013.00" x2="1749.50" y2="1035.00" stroke="#343434" stroke-width="1"/>
<line x1="1783.00" y1="1013.00" x2="1783.00" y2="1035.00" stroke="#343434" stroke-width="1"/>
<line x1="1816.70" y1="1013.00" x2="1816.70" y2="1035.00" stroke="#343434" stroke-width="1"/>
<line x1="1850.40" y1="1013.00" x2="1850.40" y2="1035.00" stroke="#343434" stroke-width="1"/>
<circle cx="1732" cy="1026.7" r="6.6" fill="url(#icoc)" opacity="0.8"/>
<circle cx="1765.8" cy="1026.7" r="6.6" fill="url(#icoc)" opacity="0.8"/>
<circle cx="1800" cy="1026.7" r="6.6" fill="url(#icoc)" opacity="0.8"/>
<circle cx="1833.3" cy="1026.7" r="6.6" fill="url(#icoc)" opacity="0.8"/>
<circle cx="1867.5" cy="1026.7" r="6.6" fill="url(#icoc)" opacity="0.8"/>
<circle cx="1901.7" cy="1026.7" r="6" fill="#3c3c3c"/>
<path d="M1678.5 1058 V1031 Q1678.5 1028 1681.5 1028 H1710 Q1713 1028 1713 1031 V1058 Z" fill="url(#nav2)"/>
<rect x="1684.5" y="1031" width="22" height="21" rx="2" fill="#8e8e8e" stroke="#1e1e1e" stroke-width="1.3"/>
<rect x="1690.50" y="1036.50" width="10.00" height="9.50" fill="#050505"/>
<path d="M1715.3 1058 V1038.5 Q1715.3 1035.5 1718.3 1035.5 H1816 V1058 Z" fill="url(#nav)"/>
<path d="M1817.3 1058 V1035.5 H1915.5 Q1918.5 1035.5 1918.5 1038.5 V1058 Z" fill="url(#nav)"/>
<line x1="1816.60" y1="1035.50" x2="1816.60" y2="1058.00" stroke="#4e4e4e" stroke-width="1.2"/>
<circle cx="1737.5" cy="1046.2" r="7.3" fill="url(#navc)"/>
<circle cx="1897.6" cy="1046.2" r="7.3" fill="url(#navc)"/>
<path d="M1736.6 1042.6 L1733.6 1046.2 L1736.6 1049.8 M1740.6 1042.6 L1737.6 1046.2 L1740.6 1049.8" fill="none" stroke="#303030" stroke-width="1.2"/>
<path d="M1894.6 1042.6 L1897.6 1046.2 L1894.6 1049.8 M1898.6 1042.6 L1901.6 1046.2 L1898.6 1049.8" fill="none" stroke="#303030" stroke-width="1.2"/>
<text x="1757.5" y="1051.8" font-size="17" fill="#303030" textLength="37.5" lengthAdjust="spacingAndGlyphs">Back</text>
<text x="1837.5" y="1051.8" font-size="17" fill="#303030" textLength="38.8" lengthAdjust="spacingAndGlyphs">Next</text>
<g>
<path d="M1631.6 996.9 L1670 1004.6 L1669.2 1025.8 L1640.4 1029.5" fill="none" stroke="#d8c8c8" stroke-opacity="0.55" stroke-width="4.6" stroke-linejoin="round" stroke-linecap="round"/>
<path d="M1631.6 996.9 L1634.8 1034.2 L1656.7 1045.8 L1697.5 1032.5 L1640.4 1029.5" fill="none" stroke="#d8c8c8" stroke-opacity="0.55" stroke-width="4.6" stroke-linejoin="round" stroke-linecap="round"/>
<path d="M1633 999 L1668 1006 L1667.5 1024 L1637 1028 Z" fill="#2a2a2a" fill-opacity="0.35"/>
<path d="M1631.6 996.9 L1670 1004.6 L1669.2 1025.8 L1640.4 1029.5" fill="none" stroke="#7e2830" stroke-opacity="0.95" stroke-width="3.3" stroke-linejoin="round" stroke-linecap="round"/>
<path d="M1631.6 996.9 L1634.8 1034.2 L1656.7 1045.8 L1697.5 1032.5 L1640.4 1029.5" fill="none" stroke="#7e2830" stroke-opacity="0.95" stroke-width="3.3" stroke-linejoin="round" stroke-linecap="round"/>
<path d="M1642.6 1008.6 L1653.4 1023.6 L1674.3 995.6" fill="none" stroke="#d6d6d6" stroke-opacity="0.85" stroke-width="5.4" stroke-linejoin="miter" stroke-linecap="round"/>
<path d="M1642.6 1008.6 L1653.4 1023.6 L1674.3 995.6" fill="none" stroke="#363636" stroke-width="3.3" stroke-linejoin="miter" stroke-linecap="round"/>
<text x="1676.2" y="1024.8" font-size="27.6" font-weight="bold" textLength="146.6" lengthAdjust="spacingAndGlyphs" fill="#e0d0d0" fill-opacity="0.6" stroke="#e0d0d0" stroke-opacity="0.6" stroke-width="2.8" stroke-linejoin="round">NOTEBOOK</text>
<text x="1676.2" y="1024.8" font-size="27.6" font-weight="bold" textLength="146.6" lengthAdjust="spacingAndGlyphs" fill="#7e2830" fill-opacity="0.9" stroke="#7e2830" stroke-opacity="0.9" stroke-width="0.9">NOTEBOOK</text>
<text x="1824.8" y="1024.8" font-size="27.6" textLength="87.5" lengthAdjust="spacingAndGlyphs" fill="#d0d0d0" fill-opacity="0.75" stroke="#d0d0d0" stroke-opacity="0.75" stroke-width="3" stroke-linejoin="round">CHECK</text>
<text x="1824.8" y="1024.8" font-size="27.6" textLength="87.5" lengthAdjust="spacingAndGlyphs" fill="#2a2a2a" fill-opacity="0.9" stroke="#2a2a2a" stroke-opacity="0.9" stroke-width="1.1">CHECK</text>
</g>
</svg>
</body></html>
